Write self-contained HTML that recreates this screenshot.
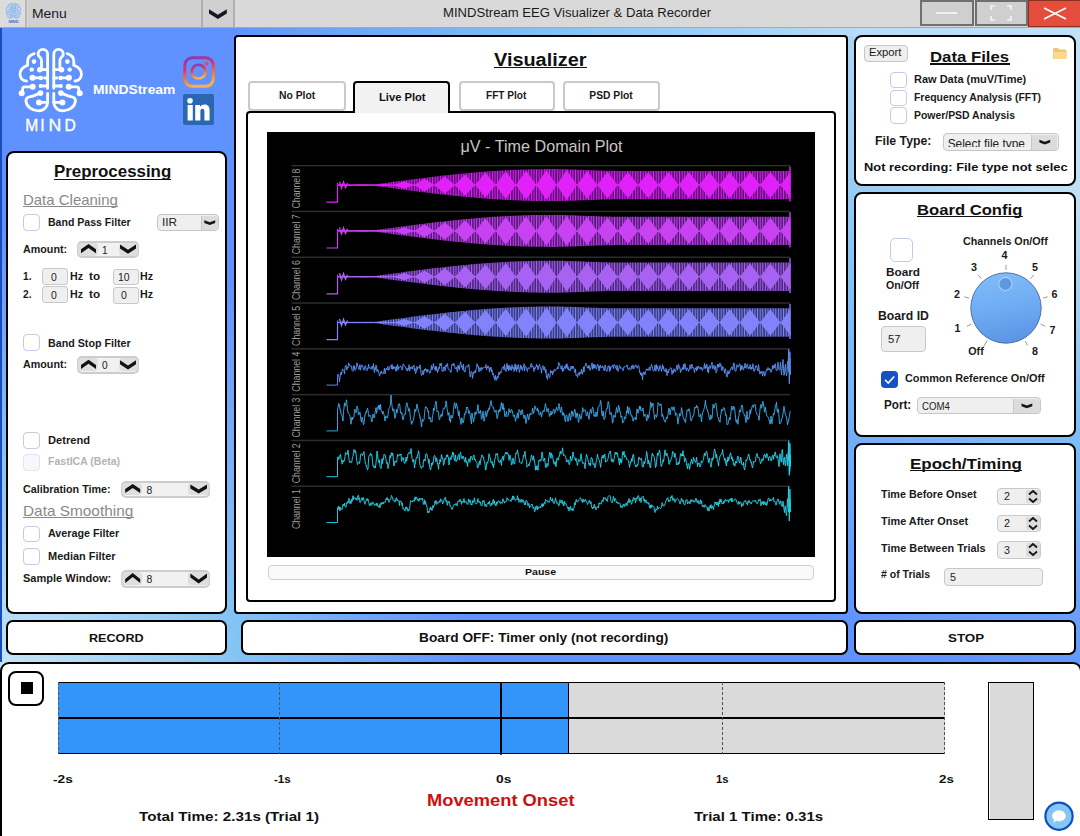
<!DOCTYPE html><html><head><meta charset="utf-8"><style>
*{margin:0;padding:0;box-sizing:border-box}
html,body{width:1080px;height:836px;overflow:hidden}
body{position:relative;font-family:"Liberation Sans",sans-serif;
background:radial-gradient(circle at 0px 690px,#cce8f8 0px,#84c4f4 240px,rgba(95,146,254,0) 470px),radial-gradient(circle at 1180px -50px,#c4e2f6 0px,#c0e0f6 270px,#80c0f4 480px,rgba(95,146,254,0) 760px),#5f92fe}
.t{position:absolute;white-space:nowrap;line-height:1}
.a{position:absolute}
.pn{position:absolute;background:#fff;border:2px solid #000;border-radius:8px}
.cb{position:absolute;width:17px;height:17px;border:1.2px solid #c3cbe6;border-radius:4px;background:#fff}
.gbox{position:absolute;background:#efefef;border:1.5px solid #c9c9c9;border-radius:4px}
</style></head><body><div class="a" style="left:0px;top:0px;width:1080px;height:28px;background:#d9d9d9;border-bottom:1.5px solid #a9a9a9"></div>
<div class="a" style="left:0px;top:0px;width:27px;height:27px;background:#dcdcdc;border-right:2px solid #b8b8b8"></div>
<div class="a" style="left:28px;top:0px;width:175px;height:27px;background:#d0d0d0;border-right:2px solid #b0b0b0"></div>
<div class="a" style="left:203px;top:0px;width:31.5px;height:27px;background:#d0d0d0;border-right:2px solid #b0b0b0"></div>
<span class="t" style="left:32.00px;top:8.00px;font-size:12.46px;font-weight:normal;color:#1a1a2a;transform:scaleX(1.119);transform-origin:left 50%;">Menu</span>
<svg class="a" style="left:0;top:0;overflow:visible" width="1" height="1"><polygon points="209.0,9.2 209.0,13.4 217.9,19.0 226.8,13.4 226.8,9.2 217.9,14.8" fill="#151525"/></svg>
<span class="t" style="left:443.00px;top:7.00px;font-size:12.75px;font-weight:normal;color:#1a1a1a;transform:scaleX(1.026);transform-origin:left 50%;">MINDStream EEG Visualizer &amp; Data Recorder</span>
<div class="a" style="left:920px;top:0px;width:54px;height:26px;background:#cfcfcf;border:2px solid #6f6f6f"></div>
<div class="a" style="left:975px;top:0px;width:53px;height:26px;background:#cfcfcf;border:2px solid #6f6f6f"></div>
<div class="a" style="left:1028px;top:0px;width:52px;height:26.5px;background:#e44c3b;border:1px solid #8c3020;border-right:none"></div>
<div class="a" style="left:936px;top:12px;width:21px;height:2px;background:#f2f2f2"></div>
<svg class="a" style="left:990px;top:5px" width="22" height="16" viewBox="0 0 22 16"><path d="M1 5V1h4M17 1h4v4M21 11v4h-4M5 15H1v-4" fill="none" stroke="#f4f4f4" stroke-width="1.6"/></svg>
<svg class="a" style="left:1043px;top:7px" width="24" height="13" viewBox="0 0 24 13"><path d="M1 1L23 12M23 1L1 12" stroke="#fff" stroke-width="1.6"/></svg>
<div class="a" style="left:0px;top:28px;width:2px;height:634px;background:#1a4cc0"></div>
<div class="a" style="left:233px;top:28px;width:847px;height:8px;background:linear-gradient(90deg,#5f92fe 0px,#6a9ff5 67px,#80c0f4 307px,#b8dcf8 627px,#c0e0f6 847px)"></div>
<svg class="a" style="left:15px;top:44px" width="72" height="72" viewBox="0 0 72 72"><g fill="none" stroke="#fff" stroke-width="2.8" stroke-linecap="round"><path d="M32.6,44.3 V10.2 A4.75,4.75 0 0 0 23.1,10.2 C23.1,12.8 26.5,13.2 26.5,16.2 V24" /><path d="M19.2,9.6 C15,10.8 12.6,13.5 12.6,17.5 V21.3 C8.5,22.8 5,26 5,30.3 C5,34 7.5,36.8 11.5,37" /><path d="M17.7,42.8 H9.6 Q7.6,42.8 7.6,45 V48" /><path d="M25.5,42 H32.6" /><path d="M19,33.9 H25" /><path d="M29.5,34 H32.6" /><path d="M24.8,25.7 H32.6" /><path d="M25.5,49.1 C22,50 19,52.5 14.5,52.8 C11.8,53.2 10.8,55 11,57.5 C11.8,63 17,66.8 23.6,66.8 C29,66.8 32.6,63 32.6,58 V49.5" /><path d="M24,58.4 H32.6" /><g stroke="none" fill="#fff"><circle cx="19" cy="17.6" r="2.3"/><circle cx="16.7" cy="25.6" r="2.2"/><circle cx="17.5" cy="33.8" r="3"/><circle cx="25.9" cy="34" r="2.2"/><circle cx="24.8" cy="25.7" r="2.7"/><circle cx="17.7" cy="42.8" r="3"/><circle cx="6.7" cy="49.3" r="3"/><circle cx="25.5" cy="42" r="1.9"/><circle cx="25.5" cy="49.1" r="2.8"/><circle cx="24" cy="58.4" r="3"/></g><g transform="translate(71.4,0) scale(-1,1)"><path d="M32.6,44.3 V10.2 A4.75,4.75 0 0 0 23.1,10.2 C23.1,12.8 26.5,13.2 26.5,16.2 V24" /><path d="M19.2,9.6 C15,10.8 12.6,13.5 12.6,17.5 V21.3 C8.5,22.8 5,26 5,30.3 C5,34 7.5,36.8 11.5,37" /><path d="M17.7,42.8 H9.6 Q7.6,42.8 7.6,45 V48" /><path d="M25.5,42 H32.6" /><path d="M19,33.9 H25" /><path d="M29.5,34 H32.6" /><path d="M24.8,25.7 H32.6" /><path d="M25.5,49.1 C22,50 19,52.5 14.5,52.8 C11.8,53.2 10.8,55 11,57.5 C11.8,63 17,66.8 23.6,66.8 C29,66.8 32.6,63 32.6,58 V49.5" /><path d="M24,58.4 H32.6" /><g stroke="none" fill="#fff"><circle cx="19" cy="17.6" r="2.3"/><circle cx="16.7" cy="25.6" r="2.2"/><circle cx="17.5" cy="33.8" r="3"/><circle cx="25.9" cy="34" r="2.2"/><circle cx="24.8" cy="25.7" r="2.7"/><circle cx="17.7" cy="42.8" r="3"/><circle cx="6.7" cy="49.3" r="3"/><circle cx="25.5" cy="42" r="1.9"/><circle cx="25.5" cy="49.1" r="2.8"/><circle cx="24" cy="58.4" r="3"/></g></g></g></svg>
<svg class="a" style="left:20px;top:115px" width="62" height="20" viewBox="20 115 62 20"><g font-family="Liberation Sans" font-size="15.6" fill="#fff" stroke="#fff" stroke-width="0.35"><text x="25.2" y="131">M</text><text x="40.2" y="131">I</text><text x="48.6" y="131" textLength="12.8" lengthAdjust="spacingAndGlyphs">N</text><text x="64.6" y="131">D</text></g></svg>
<span class="t" style="left:93.30px;top:84.00px;font-size:12.32px;font-weight:bold;color:#fff;transform:scaleX(1.125);transform-origin:left 50%;">MINDStream</span>
<svg class="a" style="left:5px;top:2px" width="17" height="22" viewBox="0 0 72 93"><g fill="none" stroke="#8fbdf2" stroke-width="5" stroke-linecap="round"><path d="M32.6,44.3 V10.2 A4.75,4.75 0 0 0 23.1,10.2 C23.1,12.8 26.5,13.2 26.5,16.2 V24" /><path d="M19.2,9.6 C15,10.8 12.6,13.5 12.6,17.5 V21.3 C8.5,22.8 5,26 5,30.3 C5,34 7.5,36.8 11.5,37" /><path d="M17.7,42.8 H9.6 Q7.6,42.8 7.6,45 V48" /><path d="M25.5,42 H32.6" /><path d="M19,33.9 H25" /><path d="M29.5,34 H32.6" /><path d="M24.8,25.7 H32.6" /><path d="M25.5,49.1 C22,50 19,52.5 14.5,52.8 C11.8,53.2 10.8,55 11,57.5 C11.8,63 17,66.8 23.6,66.8 C29,66.8 32.6,63 32.6,58 V49.5" /><path d="M24,58.4 H32.6" /><g stroke="none" fill="#7aaeee"><circle cx="19" cy="17.6" r="2.3"/><circle cx="16.7" cy="25.6" r="2.2"/><circle cx="17.5" cy="33.8" r="3"/><circle cx="25.9" cy="34" r="2.2"/><circle cx="24.8" cy="25.7" r="2.7"/><circle cx="17.7" cy="42.8" r="3"/><circle cx="6.7" cy="49.3" r="3"/><circle cx="25.5" cy="42" r="1.9"/><circle cx="25.5" cy="49.1" r="2.8"/><circle cx="24" cy="58.4" r="3"/></g><g transform="translate(71.4,0) scale(-1,1)"><path d="M32.6,44.3 V10.2 A4.75,4.75 0 0 0 23.1,10.2 C23.1,12.8 26.5,13.2 26.5,16.2 V24" /><path d="M19.2,9.6 C15,10.8 12.6,13.5 12.6,17.5 V21.3 C8.5,22.8 5,26 5,30.3 C5,34 7.5,36.8 11.5,37" /><path d="M17.7,42.8 H9.6 Q7.6,42.8 7.6,45 V48" /><path d="M25.5,42 H32.6" /><path d="M19,33.9 H25" /><path d="M29.5,34 H32.6" /><path d="M24.8,25.7 H32.6" /><path d="M25.5,49.1 C22,50 19,52.5 14.5,52.8 C11.8,53.2 10.8,55 11,57.5 C11.8,63 17,66.8 23.6,66.8 C29,66.8 32.6,63 32.6,58 V49.5" /><path d="M24,58.4 H32.6" /><g stroke="none" fill="#7aaeee"><circle cx="19" cy="17.6" r="2.3"/><circle cx="16.7" cy="25.6" r="2.2"/><circle cx="17.5" cy="33.8" r="3"/><circle cx="25.9" cy="34" r="2.2"/><circle cx="24.8" cy="25.7" r="2.7"/><circle cx="17.7" cy="42.8" r="3"/><circle cx="6.7" cy="49.3" r="3"/><circle cx="25.5" cy="42" r="1.9"/><circle cx="25.5" cy="49.1" r="2.8"/><circle cx="24" cy="58.4" r="3"/></g></g></g><text x="36" y="90" font-family="Liberation Sans" font-weight="bold" font-size="17" fill="#3d6cc8" text-anchor="middle">MIND</text></svg>
<svg class="a" style="left:182px;top:55px" width="34" height="34" viewBox="0 0 34 34"><defs><linearGradient id="ig" x1="0.35" y1="1" x2="0.1" y2="0"><stop offset="0" stop-color="#fcb045"/><stop offset="0.3" stop-color="#f77737"/><stop offset="0.62" stop-color="#e1306c"/><stop offset="1" stop-color="#833ab4"/></linearGradient></defs><rect x="2.8" y="2.8" width="28.5" height="28.5" rx="7.5" fill="none" stroke="url(#ig)" stroke-width="3"/><circle cx="16.6" cy="16.6" r="6.9" fill="none" stroke="url(#ig)" stroke-width="2.6"/><circle cx="24.6" cy="8.5" r="1.9" fill="#e8407a"/></svg>
<div class="a" style="left:183px;top:93.5px;width:31.30000000000001px;height:31.0px;background:#2a67b0;border-radius:2px"></div>
<svg class="a" style="left:183px;top:93.5px" width="31" height="31" viewBox="0 0 31 31"><circle cx="7" cy="6.8" r="2.8" fill="#fff"/><rect x="4.6" y="11" width="5.2" height="15.5" fill="#fff"/><path d="M12.2,26.5 V11 H17 V13 C18,11.3 19.8,10.6 21.6,10.6 C25,10.6 26.6,12.8 26.6,16.5 V26.5 H21.4 V17.5 C21.4,15.8 20.7,14.8 19.3,14.8 C17.9,14.8 17.4,15.9 17.4,17.5 V26.5 Z" fill="#fff"/></svg>
<div class="pn" style="left:5.5px;top:151px;width:221.5px;height:462.5px;border-radius:8px;border-width:2px;"></div>
<div class="pn" style="left:234px;top:35px;width:614px;height:578.5px;border-radius:4px;border-width:2px;"></div>
<div class="pn" style="left:854px;top:35px;width:222px;height:151px;border-radius:8px;border-width:2px;"></div>
<div class="pn" style="left:854px;top:192px;width:222px;height:244.5px;border-radius:8px;border-width:2px;"></div>
<div class="pn" style="left:854px;top:443px;width:222px;height:170.5px;border-radius:8px;border-width:2px;"></div>
<div class="pn" style="left:5.5px;top:620px;width:221.5px;height:35px;border-radius:7px;border-width:2px;"></div>
<div class="pn" style="left:240.5px;top:620px;width:607.5px;height:35px;border-radius:7px;border-width:2px;"></div>
<div class="pn" style="left:854px;top:620px;width:222px;height:35px;border-radius:7px;border-width:2px;"></div>
<div class="pn" style="left:0px;top:661.5px;width:1082px;height:188.5px;border-radius:9px;border-width:2px;"></div>
<span class="t" style="left:88.60px;top:633.00px;font-size:11.45px;font-weight:bold;color:#111;transform:scaleX(1.101);transform-origin:left 50%;">RECORD</span>
<span class="t" style="left:419.00px;top:632.00px;font-size:12.03px;font-weight:bold;color:#111;transform:scaleX(1.140);transform-origin:left 50%;">Board OFF: Timer only (not recording)</span>
<span class="t" style="left:947.60px;top:633.00px;font-size:11.45px;font-weight:bold;color:#111;transform:scaleX(1.168);transform-origin:left 50%;">STOP</span>
<span class="t" style="left:54.00px;top:163.00px;font-size:16.23px;font-weight:bold;color:#111;transform:scaleX(1.040);transform-origin:left 50%;">Preprocessing</span>
<div class="a" style="left:54px;top:178.6px;width:117px;height:1.5px;background:#111"></div>
<span class="t" style="left:23.20px;top:193.00px;font-size:14.78px;font-weight:normal;color:#8a8a8a;transform:scaleX(1.013);transform-origin:left 50%;">Data Cleaning</span>
<div class="a" style="left:23px;top:205.8px;width:95px;height:1.5px;background:#8a8a8a"></div>
<div class="a" style="left:23px;top:214px;width:17px;height:17px;border:1.3px solid #c3cbe6;border-radius:4px;background:#fff;"></div>
<span class="t" style="left:47.70px;top:218.00px;font-size:10.43px;font-weight:bold;color:#1a1a1a;transform:scaleX(1.012);transform-origin:left 50%;">Band Pass Filter</span>
<div class="a" style="left:157px;top:214px;width:62px;height:17px;background:#efefef;border:1.5px solid #c6c6c6;border-radius:4px"></div><div class="a" style="left:200.5px;top:215.5px;width:17.0px;height:14.0px;background:#dcdcdc;border-left:1px solid #c8c8c8;border-radius:0 3px 3px 0"></div><svg class="a" style="left:0;top:0;overflow:visible" width="1" height="1"><polygon points="204.3,220.3 204.3,223.1 209.8,225.1 215.2,223.1 215.2,220.3 209.8,222.3" fill="#151515"/></svg><span class="t" style="left:162.00px;top:218.00px;font-size:10.43px;font-weight:normal;color:#222;transform:scaleX(1.129);transform-origin:left 50%;">IIR</span>
<span class="t" style="left:23.00px;top:245.00px;font-size:10.14px;font-weight:bold;color:#1a1a1a;transform:scaleX(1.060);transform-origin:left 50%;">Amount:</span>
<div class="a" style="left:77px;top:240.6px;width:62px;height:17.700000000000017px;background:#f1f1f1;border:2px solid #cdcdcd;border-radius:5px"></div><div class="a" style="left:78px;top:242.6px;width:20px;height:13.200000000000017px;background:#dedede;border-radius:4px"></div><div class="a" style="left:118.5px;top:242.6px;width:19.5px;height:13.200000000000017px;background:#dedede;border-radius:4px"></div><svg class="a" style="left:0;top:0;overflow:visible" width="1" height="1"><polygon points="81.0,253.3 81.0,249.3 88.5,244.0 96.0,249.3 96.0,253.3 88.5,248.0" fill="#111"/><polygon points="120.0,244.4 120.0,248.4 128.0,253.8 136.0,248.4 136.0,244.4 128.0,249.8" fill="#111"/></svg>
<span class="t" style="left:102.00px;top:246.00px;font-size:10.14px;font-weight:normal;color:#222;">1</span>
<span class="t" style="left:23.00px;top:272.00px;font-size:10.14px;font-weight:bold;color:#1a1a1a;">1.</span>
<div class="a" style="left:42px;top:268px;width:25.5px;height:16.5px;background:#efefef;border:1.5px solid #c9c9c9;border-radius:3px"></div>
<span class="t" style="left:51.00px;top:273.00px;font-size:10.43px;font-weight:normal;color:#222;">0</span>
<span class="t" style="left:69.50px;top:272.00px;font-size:10.14px;font-weight:bold;color:#1a1a1a;transform:scaleX(1.053);transform-origin:left 50%;">Hz</span>
<span class="t" style="left:89.40px;top:272.00px;font-size:10.14px;font-weight:bold;color:#1a1a1a;transform:scaleX(1.154);transform-origin:left 50%;">to</span>
<div class="a" style="left:112.5px;top:268.5px;width:26.5px;height:16.5px;background:#efefef;border:1.5px solid #c9c9c9;border-radius:3px"></div>
<span class="t" style="left:118.00px;top:273.00px;font-size:10.43px;font-weight:normal;color:#222;">10</span>
<span class="t" style="left:140.40px;top:272.00px;font-size:10.14px;font-weight:bold;color:#1a1a1a;transform:scaleX(1.053);transform-origin:left 50%;">Hz</span>
<span class="t" style="left:23.00px;top:290.00px;font-size:10.14px;font-weight:bold;color:#1a1a1a;">2.</span>
<div class="a" style="left:42px;top:286px;width:25.5px;height:17px;background:#efefef;border:1.5px solid #c9c9c9;border-radius:3px"></div>
<span class="t" style="left:51.00px;top:291.00px;font-size:10.43px;font-weight:normal;color:#222;">0</span>
<span class="t" style="left:69.50px;top:290.00px;font-size:10.14px;font-weight:bold;color:#1a1a1a;transform:scaleX(1.053);transform-origin:left 50%;">Hz</span>
<span class="t" style="left:89.40px;top:290.00px;font-size:10.14px;font-weight:bold;color:#1a1a1a;transform:scaleX(1.154);transform-origin:left 50%;">to</span>
<div class="a" style="left:112.5px;top:286.5px;width:26.5px;height:17.0px;background:#efefef;border:1.5px solid #c9c9c9;border-radius:3px"></div>
<span class="t" style="left:121.00px;top:291.00px;font-size:10.43px;font-weight:normal;color:#222;">0</span>
<span class="t" style="left:140.40px;top:290.00px;font-size:10.14px;font-weight:bold;color:#1a1a1a;transform:scaleX(1.053);transform-origin:left 50%;">Hz</span>
<div class="a" style="left:23px;top:334px;width:17px;height:17px;border:1.3px solid #c3cbe6;border-radius:4px;background:#fff;"></div>
<span class="t" style="left:47.70px;top:339.00px;font-size:10.43px;font-weight:bold;color:#1a1a1a;transform:scaleX(1.027);transform-origin:left 50%;">Band Stop Filter</span>
<span class="t" style="left:23.00px;top:360.00px;font-size:10.14px;font-weight:bold;color:#1a1a1a;transform:scaleX(1.060);transform-origin:left 50%;">Amount:</span>
<div class="a" style="left:77px;top:356.4px;width:62px;height:17.600000000000023px;background:#f1f1f1;border:2px solid #cdcdcd;border-radius:5px"></div><div class="a" style="left:78px;top:358.4px;width:20px;height:13.100000000000023px;background:#dedede;border-radius:4px"></div><div class="a" style="left:118.5px;top:358.4px;width:19.5px;height:13.100000000000023px;background:#dedede;border-radius:4px"></div><svg class="a" style="left:0;top:0;overflow:visible" width="1" height="1"><polygon points="81.0,369.0 81.0,365.0 88.5,359.8 96.0,365.0 96.0,369.0 88.5,363.8" fill="#111"/><polygon points="120.0,360.2 120.0,364.2 128.0,369.5 136.0,364.2 136.0,360.2 128.0,365.5" fill="#111"/></svg>
<span class="t" style="left:102.00px;top:361.00px;font-size:10.14px;font-weight:normal;color:#222;">0</span>
<div class="a" style="left:23px;top:432px;width:17px;height:16.5px;border:1.3px solid #c3cbe6;border-radius:4px;background:#fff;"></div>
<span class="t" style="left:47.70px;top:436.00px;font-size:10.43px;font-weight:bold;color:#1a1a1a;transform:scaleX(1.069);transform-origin:left 50%;">Detrend</span>
<div class="a" style="left:23px;top:454px;width:17px;height:16.5px;border:1.3px solid #dfe4f2;border-radius:4px;background:#f6f8fc;"></div>
<span class="t" style="left:47.70px;top:457.00px;font-size:10.43px;font-weight:bold;color:#b3b3b3;transform:scaleX(1.010);transform-origin:left 50%;">FastICA (Beta)</span>
<span class="t" style="left:23.00px;top:485.00px;font-size:10.43px;font-weight:bold;color:#1a1a1a;transform:scaleX(1.032);transform-origin:left 50%;">Calibration Time:</span>
<div class="a" style="left:121px;top:480.7px;width:89px;height:17.30000000000001px;background:#f1f1f1;border:2px solid #cdcdcd;border-radius:5px"></div><div class="a" style="left:122px;top:482.7px;width:20px;height:12.800000000000011px;background:#dedede;border-radius:4px"></div><div class="a" style="left:188px;top:482.7px;width:20.5px;height:12.800000000000011px;background:#dedede;border-radius:4px"></div><svg class="a" style="left:0;top:0;overflow:visible" width="1" height="1"><polygon points="125.2,493.0 125.2,489.0 132.7,484.1 140.2,489.0 140.2,493.0 132.7,488.1" fill="#111"/><polygon points="190.4,484.5 190.4,488.5 198.7,493.5 207.0,488.5 207.0,484.5 198.7,489.5" fill="#111"/></svg>
<span class="t" style="left:146.50px;top:486.00px;font-size:10.43px;font-weight:normal;color:#222;">8</span>
<span class="t" style="left:23.20px;top:504.00px;font-size:14.78px;font-weight:normal;color:#8a8a8a;transform:scaleX(1.041);transform-origin:left 50%;">Data Smoothing</span>
<div class="a" style="left:23px;top:516.6px;width:110.80000000000001px;height:1.5px;background:#8a8a8a"></div>
<div class="a" style="left:23px;top:526px;width:17px;height:16px;border:1.3px solid #c3cbe6;border-radius:4px;background:#fff;"></div>
<span class="t" style="left:47.70px;top:529.00px;font-size:10.43px;font-weight:bold;color:#1a1a1a;transform:scaleX(1.029);transform-origin:left 50%;">Average Filter</span>
<div class="a" style="left:23px;top:548px;width:17px;height:16.5px;border:1.3px solid #c3cbe6;border-radius:4px;background:#fff;"></div>
<span class="t" style="left:47.70px;top:552.00px;font-size:10.43px;font-weight:bold;color:#1a1a1a;transform:scaleX(1.052);transform-origin:left 50%;">Median Filter</span>
<span class="t" style="left:23.00px;top:574.00px;font-size:10.43px;font-weight:bold;color:#1a1a1a;transform:scaleX(1.059);transform-origin:left 50%;">Sample Window:</span>
<div class="a" style="left:121px;top:569.6px;width:89px;height:18.299999999999955px;background:#f1f1f1;border:2px solid #cdcdcd;border-radius:5px"></div><div class="a" style="left:122px;top:571.6px;width:20px;height:13.799999999999955px;background:#dedede;border-radius:4px"></div><div class="a" style="left:188px;top:571.6px;width:20.5px;height:13.799999999999955px;background:#dedede;border-radius:4px"></div><svg class="a" style="left:0;top:0;overflow:visible" width="1" height="1"><polygon points="125.2,582.9 125.2,578.9 132.7,573.0 140.2,578.9 140.2,582.9 132.7,577.0" fill="#111"/><polygon points="190.4,573.4 190.4,577.4 198.7,583.4 207.0,577.4 207.0,573.4 198.7,579.4" fill="#111"/></svg>
<span class="t" style="left:146.50px;top:575.00px;font-size:10.43px;font-weight:normal;color:#222;">8</span>
<span class="t" style="left:494.40px;top:52.00px;font-size:17.83px;font-weight:bold;color:#111;transform:scaleX(1.115);transform-origin:left 50%;">Visualizer</span>
<div class="a" style="left:494.4px;top:66.6px;width:92.30000000000007px;height:1.7000000000000028px;background:#111"></div>
<div class="a" style="left:248px;top:80.5px;width:97.5px;height:30.0px;background:#fff;border:2.5px solid #c9c9c9;border-radius:4px"></div><span class="t" style="left:278.70px;top:91.00px;font-size:10.29px;font-weight:bold;color:#1a1a1a;transform:scaleX(1.007);transform-origin:left 50%;">No Plot</span>
<div class="a" style="left:459px;top:80.5px;width:96px;height:30.0px;background:#fff;border:2.5px solid #c9c9c9;border-radius:4px"></div><span class="t" style="left:485.60px;top:91.00px;font-size:10.29px;font-weight:bold;color:#1a1a1a;transform:scaleX(0.981);transform-origin:left 50%;">FFT Plot</span>
<div class="a" style="left:563.3px;top:80.5px;width:96.70000000000005px;height:30.0px;background:#fff;border:2.5px solid #c9c9c9;border-radius:4px"></div><span class="t" style="left:589.30px;top:91.00px;font-size:10.29px;font-weight:bold;color:#1a1a1a;">PSD Plot</span>
<div class="a" style="left:245.5px;top:111px;width:590.5px;height:491px;border:2px solid #000;border-radius:4px;background:#fff"></div>
<div class="a" style="left:353px;top:80.5px;width:97px;height:32.5px;background:#f2f2f2;border:2.5px solid #000;border-bottom:none;border-radius:4px 4px 0 0;z-index:2"></div><span class="t" style="left:378.50px;top:92.00px;font-size:10.72px;font-weight:bold;color:#111;transform:scaleX(1.043);transform-origin:left 50%;z-index:3;">Live Plot</span>
<div class="a" style="left:266.5px;top:132px;width:548.5px;height:425px;background:#000"></div>
<div class="a" style="left:268px;top:564.5px;width:546px;height:15.5px;background:#fafafa;border:1.3px solid #cfcfcf;border-radius:4px"></div>
<span class="t" style="left:525.00px;top:567.00px;font-size:9.71px;font-weight:bold;color:#111;transform:scaleX(1.085);transform-origin:left 50%;">Pause</span>
<svg class="a" style="left:266.5px;top:132px" width="548.5" height="425" viewBox="266.5 132 548.5 425"><defs><pattern id="st5" width="2.6" height="10" patternUnits="userSpaceOnUse"><rect width="2.6" height="10" fill="#343a78"/><rect width="1" height="10" fill="#8282fa"/></pattern><pattern id="st6" width="2.6" height="10" patternUnits="userSpaceOnUse"><rect width="2.6" height="10" fill="#462676"/><rect width="1" height="10" fill="#a862f2"/></pattern><pattern id="st7" width="2.6" height="10" patternUnits="userSpaceOnUse"><rect width="2.6" height="10" fill="#531a74"/><rect width="1" height="10" fill="#c842f2"/></pattern><pattern id="st8" width="2.6" height="10" patternUnits="userSpaceOnUse"><rect width="2.6" height="10" fill="#5a0f72"/><rect width="1" height="10" fill="#e021f8"/></pattern></defs><text x="541" y="152.4" font-family="Liberation Sans" font-size="16.6" fill="#c6c6c6" text-anchor="middle" textLength="162" lengthAdjust="spacingAndGlyphs">μV - Time Domain Plot</text><rect x="291" y="164.9" width="498.5" height="1.5" fill="#2d2d2d"/><rect x="291" y="210.7" width="498.5" height="1.5" fill="#2d2d2d"/><rect x="291" y="256.5" width="498.5" height="1.5" fill="#2d2d2d"/><rect x="291" y="302.3" width="498.5" height="1.5" fill="#2d2d2d"/><rect x="291" y="348.1" width="498.5" height="1.5" fill="#2d2d2d"/><rect x="291" y="393.9" width="498.5" height="1.5" fill="#2d2d2d"/><rect x="291" y="439.7" width="498.5" height="1.5" fill="#2d2d2d"/><rect x="291" y="485.5" width="498.5" height="1.5" fill="#2d2d2d"/><text transform="translate(299.5,188.5) rotate(-90)" font-family="Liberation Sans" font-size="10.3" fill="#9d9d9d" text-anchor="middle" textLength="40" lengthAdjust="spacingAndGlyphs">Channel 8</text><text transform="translate(299.5,234.3) rotate(-90)" font-family="Liberation Sans" font-size="10.3" fill="#9d9d9d" text-anchor="middle" textLength="40" lengthAdjust="spacingAndGlyphs">Channel 7</text><text transform="translate(299.5,280.1) rotate(-90)" font-family="Liberation Sans" font-size="10.3" fill="#9d9d9d" text-anchor="middle" textLength="40" lengthAdjust="spacingAndGlyphs">Channel 6</text><text transform="translate(299.5,325.9) rotate(-90)" font-family="Liberation Sans" font-size="10.3" fill="#9d9d9d" text-anchor="middle" textLength="40" lengthAdjust="spacingAndGlyphs">Channel 5</text><text transform="translate(299.5,371.7) rotate(-90)" font-family="Liberation Sans" font-size="10.3" fill="#9d9d9d" text-anchor="middle" textLength="40" lengthAdjust="spacingAndGlyphs">Channel 4</text><text transform="translate(299.5,417.5) rotate(-90)" font-family="Liberation Sans" font-size="10.3" fill="#9d9d9d" text-anchor="middle" textLength="40" lengthAdjust="spacingAndGlyphs">Channel 3</text><text transform="translate(299.5,463.3) rotate(-90)" font-family="Liberation Sans" font-size="10.3" fill="#9d9d9d" text-anchor="middle" textLength="40" lengthAdjust="spacingAndGlyphs">Channel 2</text><text transform="translate(299.5,509.1) rotate(-90)" font-family="Liberation Sans" font-size="10.3" fill="#9d9d9d" text-anchor="middle" textLength="40" lengthAdjust="spacingAndGlyphs">Channel 1</text><path d="M326,202.2 H337.0 V183.1" fill="none" stroke="#e021f8" stroke-width="1.2"/><polygon points="337.0,184.30 339.0,184.30 341.0,184.30 343.0,184.30 345.0,184.30 347.0,184.30 349.0,184.30 351.0,184.30 353.0,184.30 355.0,184.30 357.0,184.30 359.0,184.30 361.0,184.30 363.0,184.30 365.0,184.30 367.0,184.30 369.0,184.30 371.0,184.30 373.0,184.30 375.0,184.30 377.0,184.03 379.0,183.75 381.0,183.48 383.0,183.21 385.0,182.94 387.0,182.67 389.0,182.39 391.0,182.12 393.0,181.85 395.0,181.59 397.0,181.32 399.0,181.05 401.0,180.78 403.0,180.52 405.0,180.26 407.0,179.99 409.0,179.73 411.0,179.47 413.0,179.22 415.0,178.96 417.0,178.70 419.0,178.45 421.0,178.20 423.0,177.95 425.0,177.70 427.0,177.46 429.0,177.22 431.0,176.98 433.0,176.74 435.0,176.50 437.0,176.27 439.0,176.04 441.0,175.81 443.0,175.59 445.0,175.37 447.0,175.15 449.0,174.93 451.0,174.72 453.0,174.51 455.0,174.30 457.0,174.10 459.0,173.89 461.0,173.70 463.0,173.50 465.0,173.31 467.0,173.13 469.0,172.94 471.0,172.76 473.0,172.59 475.0,172.42 477.0,172.25 479.0,172.08 481.0,171.92 483.0,171.77 485.0,171.61 487.0,171.47 489.0,171.32 491.0,171.18 493.0,171.05 495.0,170.91 497.0,170.79 499.0,170.67 501.0,170.55 503.0,170.43 505.0,170.32 507.0,170.22 509.0,170.12 511.0,170.02 513.0,169.93 515.0,169.84 517.0,169.76 519.0,169.68 521.0,169.61 523.0,169.54 525.0,169.48 527.0,169.42 529.0,169.37 531.0,169.32 533.0,169.28 535.0,169.24 537.0,169.20 539.0,169.17 541.0,169.15 543.0,169.13 545.0,169.12 547.0,169.11 549.0,169.10 551.0,169.10 553.0,169.11 555.0,169.12 557.0,169.14 559.0,169.17 561.0,169.21 563.0,169.25 565.0,169.30 567.0,169.35 569.0,169.41 571.0,169.47 573.0,169.54 575.0,169.61 577.0,169.68 579.0,169.76 581.0,169.84 583.0,169.92 585.0,170.00 587.0,170.08 589.0,170.16 591.0,170.24 593.0,170.32 595.0,170.39 597.0,170.46 599.0,170.53 601.0,170.59 603.0,170.65 605.0,170.70 607.0,170.75 609.0,170.79 611.0,170.83 613.0,170.86 615.0,170.88 617.0,170.89 619.0,170.90 621.0,170.90 623.0,170.90 625.0,170.90 627.0,170.90 629.0,170.90 631.0,170.90 633.0,170.90 635.0,170.90 637.0,170.90 639.0,170.90 641.0,170.90 643.0,170.90 645.0,170.90 647.0,170.90 649.0,170.90 651.0,170.90 653.0,170.90 655.0,170.90 657.0,170.90 659.0,170.90 661.0,170.90 663.0,170.90 665.0,170.90 667.0,170.90 669.0,170.90 671.0,170.90 673.0,170.90 675.0,170.90 677.0,170.90 679.0,170.90 681.0,170.90 683.0,170.90 685.0,170.90 687.0,170.90 689.0,170.90 691.0,170.90 693.0,170.90 695.0,170.90 697.0,170.90 699.0,170.90 701.0,170.90 703.0,170.90 705.0,170.90 707.0,170.90 709.0,170.90 711.0,170.90 713.0,170.90 715.0,170.90 717.0,170.90 719.0,170.90 721.0,170.90 723.0,170.90 725.0,170.90 727.0,170.90 729.0,170.90 731.0,170.90 733.0,170.90 735.0,170.90 737.0,170.90 739.0,170.90 741.0,170.90 743.0,170.90 745.0,170.90 747.0,170.90 749.0,170.90 751.0,170.90 753.0,170.90 755.0,170.90 757.0,170.90 759.0,170.90 761.0,170.90 763.0,170.90 765.0,170.90 767.0,170.90 769.0,170.90 771.0,170.90 773.0,170.90 775.0,170.90 777.0,170.90 779.0,170.90 781.0,170.90 783.0,170.90 785.0,170.90 787.0,170.90 789.0,170.90 789.0,199.30 787.0,199.30 785.0,199.30 783.0,199.30 781.0,199.30 779.0,199.30 777.0,199.30 775.0,199.30 773.0,199.30 771.0,199.30 769.0,199.30 767.0,199.30 765.0,199.30 763.0,199.30 761.0,199.30 759.0,199.30 757.0,199.30 755.0,199.30 753.0,199.30 751.0,199.30 749.0,199.30 747.0,199.30 745.0,199.30 743.0,199.30 741.0,199.30 739.0,199.30 737.0,199.30 735.0,199.30 733.0,199.30 731.0,199.30 729.0,199.30 727.0,199.30 725.0,199.30 723.0,199.30 721.0,199.30 719.0,199.30 717.0,199.30 715.0,199.30 713.0,199.30 711.0,199.30 709.0,199.30 707.0,199.30 705.0,199.30 703.0,199.30 701.0,199.30 699.0,199.30 697.0,199.30 695.0,199.30 693.0,199.30 691.0,199.30 689.0,199.30 687.0,199.30 685.0,199.30 683.0,199.30 681.0,199.30 679.0,199.30 677.0,199.30 675.0,199.30 673.0,199.30 671.0,199.30 669.0,199.30 667.0,199.30 665.0,199.30 663.0,199.30 661.0,199.30 659.0,199.30 657.0,199.30 655.0,199.30 653.0,199.30 651.0,199.30 649.0,199.30 647.0,199.30 645.0,199.30 643.0,199.30 641.0,199.30 639.0,199.30 637.0,199.30 635.0,199.30 633.0,199.30 631.0,199.30 629.0,199.30 627.0,199.30 625.0,199.30 623.0,199.30 621.0,199.30 619.0,199.30 617.0,199.31 615.0,199.32 613.0,199.34 611.0,199.37 609.0,199.41 607.0,199.45 605.0,199.50 603.0,199.55 601.0,199.61 599.0,199.67 597.0,199.74 595.0,199.81 593.0,199.88 591.0,199.96 589.0,200.04 587.0,200.12 585.0,200.20 583.0,200.28 581.0,200.36 579.0,200.44 577.0,200.52 575.0,200.59 573.0,200.66 571.0,200.73 569.0,200.79 567.0,200.85 565.0,200.90 563.0,200.95 561.0,200.99 559.0,201.03 557.0,201.06 555.0,201.08 553.0,201.09 551.0,201.10 549.0,201.10 547.0,201.09 545.0,201.08 543.0,201.07 541.0,201.05 539.0,201.03 537.0,201.00 535.0,200.96 533.0,200.92 531.0,200.88 529.0,200.83 527.0,200.78 525.0,200.72 523.0,200.66 521.0,200.59 519.0,200.52 517.0,200.44 515.0,200.36 513.0,200.27 511.0,200.18 509.0,200.08 507.0,199.98 505.0,199.88 503.0,199.77 501.0,199.65 499.0,199.53 497.0,199.41 495.0,199.29 493.0,199.15 491.0,199.02 489.0,198.88 487.0,198.73 485.0,198.59 483.0,198.43 481.0,198.28 479.0,198.12 477.0,197.95 475.0,197.78 473.0,197.61 471.0,197.44 469.0,197.26 467.0,197.07 465.0,196.89 463.0,196.70 461.0,196.50 459.0,196.31 457.0,196.10 455.0,195.90 453.0,195.69 451.0,195.48 449.0,195.27 447.0,195.05 445.0,194.83 443.0,194.61 441.0,194.39 439.0,194.16 437.0,193.93 435.0,193.70 433.0,193.46 431.0,193.22 429.0,192.98 427.0,192.74 425.0,192.50 423.0,192.25 421.0,192.00 419.0,191.75 417.0,191.50 415.0,191.24 413.0,190.98 411.0,190.73 409.0,190.47 407.0,190.21 405.0,189.94 403.0,189.68 401.0,189.42 399.0,189.15 397.0,188.88 395.0,188.61 393.0,188.35 391.0,188.08 389.0,187.81 387.0,187.53 385.0,187.26 383.0,186.99 381.0,186.72 379.0,186.45 377.0,186.17 375.0,185.90 373.0,185.90 371.0,185.90 369.0,185.90 367.0,185.90 365.0,185.90 363.0,185.90 361.0,185.90 359.0,185.90 357.0,185.90 355.0,185.90 353.0,185.90 351.0,185.90 349.0,185.90 347.0,185.90 345.0,185.90 343.0,185.90 341.0,185.90 339.0,185.90 337.0,185.90" fill="url(#st8)"/><path d="M337.0,185.1 L342.4,184.6 L352.6,185.1 L342.4,185.6 Z M352.6,185.1 L362.8,184.6 L373.0,185.1 L362.8,185.6 Z M373.0,185.1 L383.1,184.2 L393.3,185.1 L383.1,186.0 Z M393.3,185.1 L403.5,181.5 L413.7,185.1 L403.5,188.7 Z M413.7,185.1 L423.9,178.8 L434.0,185.1 L423.9,191.4 Z M434.0,185.1 L444.2,176.5 L454.4,185.1 L444.2,193.7 Z M454.4,185.1 L464.5,174.4 L474.7,185.1 L464.5,195.8 Z M474.7,185.1 L484.9,172.6 L495.1,185.1 L484.9,197.6 Z M495.1,185.1 L505.2,171.3 L515.4,185.1 L505.2,198.9 Z M515.4,185.1 L525.6,170.5 L535.8,185.1 L525.6,199.7 Z M535.8,185.1 L546.0,170.1 L556.1,185.1 L546.0,200.1 Z M556.1,185.1 L566.3,170.3 L576.5,185.1 L566.3,199.9 Z M576.5,185.1 L586.6,171.1 L596.8,185.1 L586.6,199.1 Z M596.8,185.1 L607.0,171.8 L617.2,185.1 L607.0,198.4 Z M617.2,185.1 L627.4,171.9 L637.5,185.1 L627.4,198.3 Z M637.5,185.1 L647.7,171.9 L657.9,185.1 L647.7,198.3 Z M657.9,185.1 L668.0,171.9 L678.2,185.1 L668.0,198.3 Z M678.2,185.1 L688.4,171.9 L698.6,185.1 L688.4,198.3 Z M698.6,185.1 L708.8,171.9 L718.9,185.1 L708.8,198.3 Z M718.9,185.1 L729.1,171.9 L739.3,185.1 L729.1,198.3 Z M739.3,185.1 L749.5,171.9 L759.6,185.1 L749.5,198.3 Z M759.6,185.1 L769.8,171.9 L780.0,185.1 L769.8,198.3 Z M780.0,185.1 L790.1,171.9 L790.0,185.1 L790.1,198.3 Z" fill="#e021f8"/><path d="M337.0,185.1 H790.0" stroke="#e021f8" stroke-width="1.2"/><rect x="788.8" y="166.5" width="1.4" height="35.1" fill="#e021f8"/><path d="M339,181.6 L341,188.1 L343,182.1 L345,187.6 L347,183.1" fill="none" stroke="#e021f8" stroke-width="1.4"/><path d="M326,248.0 H337.0 V228.9" fill="none" stroke="#c842f2" stroke-width="1.2"/><polygon points="337.0,230.10 339.0,230.10 341.0,230.10 343.0,230.10 345.0,230.10 347.0,230.10 349.0,230.10 351.0,230.10 353.0,230.10 355.0,230.10 357.0,230.10 359.0,230.10 361.0,230.10 363.0,230.10 365.0,230.10 367.0,230.10 369.0,230.10 371.0,230.10 373.0,230.10 375.0,230.10 377.0,229.83 379.0,229.55 381.0,229.28 383.0,229.01 385.0,228.74 387.0,228.47 389.0,228.19 391.0,227.92 393.0,227.65 395.0,227.39 397.0,227.12 399.0,226.85 401.0,226.58 403.0,226.32 405.0,226.06 407.0,225.79 409.0,225.53 411.0,225.27 413.0,225.02 415.0,224.76 417.0,224.50 419.0,224.25 421.0,224.00 423.0,223.75 425.0,223.50 427.0,223.26 429.0,223.02 431.0,222.78 433.0,222.54 435.0,222.30 437.0,222.07 439.0,221.84 441.0,221.61 443.0,221.39 445.0,221.17 447.0,220.95 449.0,220.73 451.0,220.52 453.0,220.31 455.0,220.10 457.0,219.90 459.0,219.69 461.0,219.50 463.0,219.30 465.0,219.11 467.0,218.93 469.0,218.74 471.0,218.56 473.0,218.39 475.0,218.22 477.0,218.05 479.0,217.88 481.0,217.72 483.0,217.57 485.0,217.41 487.0,217.27 489.0,217.12 491.0,216.98 493.0,216.85 495.0,216.71 497.0,216.59 499.0,216.47 501.0,216.35 503.0,216.23 505.0,216.12 507.0,216.02 509.0,215.92 511.0,215.82 513.0,215.73 515.0,215.64 517.0,215.56 519.0,215.48 521.0,215.41 523.0,215.34 525.0,215.28 527.0,215.22 529.0,215.17 531.0,215.12 533.0,215.08 535.0,215.04 537.0,215.00 539.0,214.97 541.0,214.95 543.0,214.93 545.0,214.92 547.0,214.91 549.0,214.90 551.0,214.90 553.0,214.91 555.0,214.92 557.0,214.94 559.0,214.97 561.0,215.01 563.0,215.05 565.0,215.10 567.0,215.15 569.0,215.21 571.0,215.27 573.0,215.34 575.0,215.41 577.0,215.48 579.0,215.56 581.0,215.64 583.0,215.72 585.0,215.80 587.0,215.88 589.0,215.96 591.0,216.04 593.0,216.12 595.0,216.19 597.0,216.26 599.0,216.33 601.0,216.39 603.0,216.45 605.0,216.50 607.0,216.55 609.0,216.59 611.0,216.63 613.0,216.66 615.0,216.68 617.0,216.69 619.0,216.70 621.0,216.70 623.0,216.70 625.0,216.70 627.0,216.70 629.0,216.70 631.0,216.70 633.0,216.70 635.0,216.70 637.0,216.70 639.0,216.70 641.0,216.70 643.0,216.70 645.0,216.70 647.0,216.70 649.0,216.70 651.0,216.70 653.0,216.70 655.0,216.70 657.0,216.70 659.0,216.70 661.0,216.70 663.0,216.70 665.0,216.70 667.0,216.70 669.0,216.70 671.0,216.70 673.0,216.70 675.0,216.70 677.0,216.70 679.0,216.70 681.0,216.70 683.0,216.70 685.0,216.70 687.0,216.70 689.0,216.70 691.0,216.70 693.0,216.70 695.0,216.70 697.0,216.70 699.0,216.70 701.0,216.70 703.0,216.70 705.0,216.70 707.0,216.70 709.0,216.70 711.0,216.70 713.0,216.70 715.0,216.70 717.0,216.70 719.0,216.70 721.0,216.70 723.0,216.70 725.0,216.70 727.0,216.70 729.0,216.70 731.0,216.70 733.0,216.70 735.0,216.70 737.0,216.70 739.0,216.70 741.0,216.70 743.0,216.70 745.0,216.70 747.0,216.70 749.0,216.70 751.0,216.70 753.0,216.70 755.0,216.70 757.0,216.70 759.0,216.70 761.0,216.70 763.0,216.70 765.0,216.70 767.0,216.70 769.0,216.70 771.0,216.70 773.0,216.70 775.0,216.70 777.0,216.70 779.0,216.70 781.0,216.70 783.0,216.70 785.0,216.70 787.0,216.70 789.0,216.70 789.0,245.10 787.0,245.10 785.0,245.10 783.0,245.10 781.0,245.10 779.0,245.10 777.0,245.10 775.0,245.10 773.0,245.10 771.0,245.10 769.0,245.10 767.0,245.10 765.0,245.10 763.0,245.10 761.0,245.10 759.0,245.10 757.0,245.10 755.0,245.10 753.0,245.10 751.0,245.10 749.0,245.10 747.0,245.10 745.0,245.10 743.0,245.10 741.0,245.10 739.0,245.10 737.0,245.10 735.0,245.10 733.0,245.10 731.0,245.10 729.0,245.10 727.0,245.10 725.0,245.10 723.0,245.10 721.0,245.10 719.0,245.10 717.0,245.10 715.0,245.10 713.0,245.10 711.0,245.10 709.0,245.10 707.0,245.10 705.0,245.10 703.0,245.10 701.0,245.10 699.0,245.10 697.0,245.10 695.0,245.10 693.0,245.10 691.0,245.10 689.0,245.10 687.0,245.10 685.0,245.10 683.0,245.10 681.0,245.10 679.0,245.10 677.0,245.10 675.0,245.10 673.0,245.10 671.0,245.10 669.0,245.10 667.0,245.10 665.0,245.10 663.0,245.10 661.0,245.10 659.0,245.10 657.0,245.10 655.0,245.10 653.0,245.10 651.0,245.10 649.0,245.10 647.0,245.10 645.0,245.10 643.0,245.10 641.0,245.10 639.0,245.10 637.0,245.10 635.0,245.10 633.0,245.10 631.0,245.10 629.0,245.10 627.0,245.10 625.0,245.10 623.0,245.10 621.0,245.10 619.0,245.10 617.0,245.11 615.0,245.12 613.0,245.14 611.0,245.17 609.0,245.21 607.0,245.25 605.0,245.30 603.0,245.35 601.0,245.41 599.0,245.47 597.0,245.54 595.0,245.61 593.0,245.68 591.0,245.76 589.0,245.84 587.0,245.92 585.0,246.00 583.0,246.08 581.0,246.16 579.0,246.24 577.0,246.32 575.0,246.39 573.0,246.46 571.0,246.53 569.0,246.59 567.0,246.65 565.0,246.70 563.0,246.75 561.0,246.79 559.0,246.83 557.0,246.86 555.0,246.88 553.0,246.89 551.0,246.90 549.0,246.90 547.0,246.89 545.0,246.88 543.0,246.87 541.0,246.85 539.0,246.83 537.0,246.80 535.0,246.76 533.0,246.72 531.0,246.68 529.0,246.63 527.0,246.58 525.0,246.52 523.0,246.46 521.0,246.39 519.0,246.32 517.0,246.24 515.0,246.16 513.0,246.07 511.0,245.98 509.0,245.88 507.0,245.78 505.0,245.68 503.0,245.57 501.0,245.45 499.0,245.33 497.0,245.21 495.0,245.09 493.0,244.95 491.0,244.82 489.0,244.68 487.0,244.53 485.0,244.39 483.0,244.23 481.0,244.08 479.0,243.92 477.0,243.75 475.0,243.58 473.0,243.41 471.0,243.24 469.0,243.06 467.0,242.87 465.0,242.69 463.0,242.50 461.0,242.30 459.0,242.11 457.0,241.90 455.0,241.70 453.0,241.49 451.0,241.28 449.0,241.07 447.0,240.85 445.0,240.63 443.0,240.41 441.0,240.19 439.0,239.96 437.0,239.73 435.0,239.50 433.0,239.26 431.0,239.02 429.0,238.78 427.0,238.54 425.0,238.30 423.0,238.05 421.0,237.80 419.0,237.55 417.0,237.30 415.0,237.04 413.0,236.78 411.0,236.53 409.0,236.27 407.0,236.01 405.0,235.74 403.0,235.48 401.0,235.22 399.0,234.95 397.0,234.68 395.0,234.41 393.0,234.15 391.0,233.88 389.0,233.61 387.0,233.33 385.0,233.06 383.0,232.79 381.0,232.52 379.0,232.25 377.0,231.97 375.0,231.70 373.0,231.70 371.0,231.70 369.0,231.70 367.0,231.70 365.0,231.70 363.0,231.70 361.0,231.70 359.0,231.70 357.0,231.70 355.0,231.70 353.0,231.70 351.0,231.70 349.0,231.70 347.0,231.70 345.0,231.70 343.0,231.70 341.0,231.70 339.0,231.70 337.0,231.70" fill="url(#st7)"/><path d="M337.0,230.9 L342.4,230.4 L352.6,230.9 L342.4,231.4 Z M352.6,230.9 L362.8,230.4 L373.0,230.9 L362.8,231.4 Z M373.0,230.9 L383.1,230.0 L393.3,230.9 L383.1,231.8 Z M393.3,230.9 L403.5,227.3 L413.7,230.9 L403.5,234.5 Z M413.7,230.9 L423.9,224.6 L434.0,230.9 L423.9,237.2 Z M434.0,230.9 L444.2,222.3 L454.4,230.9 L444.2,239.5 Z M454.4,230.9 L464.5,220.2 L474.7,230.9 L464.5,241.6 Z M474.7,230.9 L484.9,218.4 L495.1,230.9 L484.9,243.4 Z M495.1,230.9 L505.2,217.1 L515.4,230.9 L505.2,244.7 Z M515.4,230.9 L525.6,216.3 L535.8,230.9 L525.6,245.5 Z M535.8,230.9 L546.0,215.9 L556.1,230.9 L546.0,245.9 Z M556.1,230.9 L566.3,216.1 L576.5,230.9 L566.3,245.7 Z M576.5,230.9 L586.6,216.9 L596.8,230.9 L586.6,244.9 Z M596.8,230.9 L607.0,217.6 L617.2,230.9 L607.0,244.2 Z M617.2,230.9 L627.4,217.7 L637.5,230.9 L627.4,244.1 Z M637.5,230.9 L647.7,217.7 L657.9,230.9 L647.7,244.1 Z M657.9,230.9 L668.0,217.7 L678.2,230.9 L668.0,244.1 Z M678.2,230.9 L688.4,217.7 L698.6,230.9 L688.4,244.1 Z M698.6,230.9 L708.8,217.7 L718.9,230.9 L708.8,244.1 Z M718.9,230.9 L729.1,217.7 L739.3,230.9 L729.1,244.1 Z M739.3,230.9 L749.5,217.7 L759.6,230.9 L749.5,244.1 Z M759.6,230.9 L769.8,217.7 L780.0,230.9 L769.8,244.1 Z M780.0,230.9 L790.1,217.7 L790.0,230.9 L790.1,244.1 Z" fill="#c842f2"/><path d="M337.0,230.9 H790.0" stroke="#c842f2" stroke-width="1.2"/><rect x="788.8" y="212.3" width="1.4" height="35.1" fill="#c842f2"/><path d="M339,227.4 L341,233.9 L343,227.9 L345,233.4 L347,228.9" fill="none" stroke="#c842f2" stroke-width="1.4"/><path d="M326,293.8 H337.0 V274.7" fill="none" stroke="#a862f2" stroke-width="1.2"/><polygon points="337.0,275.90 339.0,275.90 341.0,275.90 343.0,275.90 345.0,275.90 347.0,275.90 349.0,275.90 351.0,275.90 353.0,275.90 355.0,275.90 357.0,275.90 359.0,275.90 361.0,275.90 363.0,275.90 365.0,275.90 367.0,275.90 369.0,275.90 371.0,275.90 373.0,275.90 375.0,275.90 377.0,275.63 379.0,275.35 381.0,275.08 383.0,274.81 385.0,274.54 387.0,274.27 389.0,273.99 391.0,273.72 393.0,273.45 395.0,273.19 397.0,272.92 399.0,272.65 401.0,272.38 403.0,272.12 405.0,271.86 407.0,271.59 409.0,271.33 411.0,271.07 413.0,270.82 415.0,270.56 417.0,270.30 419.0,270.05 421.0,269.80 423.0,269.55 425.0,269.30 427.0,269.06 429.0,268.82 431.0,268.58 433.0,268.34 435.0,268.10 437.0,267.87 439.0,267.64 441.0,267.41 443.0,267.19 445.0,266.97 447.0,266.75 449.0,266.53 451.0,266.32 453.0,266.11 455.0,265.90 457.0,265.70 459.0,265.49 461.0,265.30 463.0,265.10 465.0,264.91 467.0,264.73 469.0,264.54 471.0,264.36 473.0,264.19 475.0,264.02 477.0,263.85 479.0,263.68 481.0,263.52 483.0,263.37 485.0,263.21 487.0,263.07 489.0,262.92 491.0,262.78 493.0,262.65 495.0,262.51 497.0,262.39 499.0,262.27 501.0,262.15 503.0,262.03 505.0,261.92 507.0,261.82 509.0,261.72 511.0,261.62 513.0,261.53 515.0,261.44 517.0,261.36 519.0,261.28 521.0,261.21 523.0,261.14 525.0,261.08 527.0,261.02 529.0,260.97 531.0,260.92 533.0,260.88 535.0,260.84 537.0,260.80 539.0,260.77 541.0,260.75 543.0,260.73 545.0,260.72 547.0,260.71 549.0,260.70 551.0,260.70 553.0,260.71 555.0,260.72 557.0,260.74 559.0,260.77 561.0,260.81 563.0,260.85 565.0,260.90 567.0,260.95 569.0,261.01 571.0,261.07 573.0,261.14 575.0,261.21 577.0,261.28 579.0,261.36 581.0,261.44 583.0,261.52 585.0,261.60 587.0,261.68 589.0,261.76 591.0,261.84 593.0,261.92 595.0,261.99 597.0,262.06 599.0,262.13 601.0,262.19 603.0,262.25 605.0,262.30 607.0,262.35 609.0,262.39 611.0,262.43 613.0,262.46 615.0,262.48 617.0,262.49 619.0,262.50 621.0,262.50 623.0,262.50 625.0,262.50 627.0,262.50 629.0,262.50 631.0,262.50 633.0,262.50 635.0,262.50 637.0,262.50 639.0,262.50 641.0,262.50 643.0,262.50 645.0,262.50 647.0,262.50 649.0,262.50 651.0,262.50 653.0,262.50 655.0,262.50 657.0,262.50 659.0,262.50 661.0,262.50 663.0,262.50 665.0,262.50 667.0,262.50 669.0,262.50 671.0,262.50 673.0,262.50 675.0,262.50 677.0,262.50 679.0,262.50 681.0,262.50 683.0,262.50 685.0,262.50 687.0,262.50 689.0,262.50 691.0,262.50 693.0,262.50 695.0,262.50 697.0,262.50 699.0,262.50 701.0,262.50 703.0,262.50 705.0,262.50 707.0,262.50 709.0,262.50 711.0,262.50 713.0,262.50 715.0,262.50 717.0,262.50 719.0,262.50 721.0,262.50 723.0,262.50 725.0,262.50 727.0,262.50 729.0,262.50 731.0,262.50 733.0,262.50 735.0,262.50 737.0,262.50 739.0,262.50 741.0,262.50 743.0,262.50 745.0,262.50 747.0,262.50 749.0,262.50 751.0,262.50 753.0,262.50 755.0,262.50 757.0,262.50 759.0,262.50 761.0,262.50 763.0,262.50 765.0,262.50 767.0,262.50 769.0,262.50 771.0,262.50 773.0,262.50 775.0,262.50 777.0,262.50 779.0,262.50 781.0,262.50 783.0,262.50 785.0,262.50 787.0,262.50 789.0,262.50 789.0,290.90 787.0,290.90 785.0,290.90 783.0,290.90 781.0,290.90 779.0,290.90 777.0,290.90 775.0,290.90 773.0,290.90 771.0,290.90 769.0,290.90 767.0,290.90 765.0,290.90 763.0,290.90 761.0,290.90 759.0,290.90 757.0,290.90 755.0,290.90 753.0,290.90 751.0,290.90 749.0,290.90 747.0,290.90 745.0,290.90 743.0,290.90 741.0,290.90 739.0,290.90 737.0,290.90 735.0,290.90 733.0,290.90 731.0,290.90 729.0,290.90 727.0,290.90 725.0,290.90 723.0,290.90 721.0,290.90 719.0,290.90 717.0,290.90 715.0,290.90 713.0,290.90 711.0,290.90 709.0,290.90 707.0,290.90 705.0,290.90 703.0,290.90 701.0,290.90 699.0,290.90 697.0,290.90 695.0,290.90 693.0,290.90 691.0,290.90 689.0,290.90 687.0,290.90 685.0,290.90 683.0,290.90 681.0,290.90 679.0,290.90 677.0,290.90 675.0,290.90 673.0,290.90 671.0,290.90 669.0,290.90 667.0,290.90 665.0,290.90 663.0,290.90 661.0,290.90 659.0,290.90 657.0,290.90 655.0,290.90 653.0,290.90 651.0,290.90 649.0,290.90 647.0,290.90 645.0,290.90 643.0,290.90 641.0,290.90 639.0,290.90 637.0,290.90 635.0,290.90 633.0,290.90 631.0,290.90 629.0,290.90 627.0,290.90 625.0,290.90 623.0,290.90 621.0,290.90 619.0,290.90 617.0,290.91 615.0,290.92 613.0,290.94 611.0,290.97 609.0,291.01 607.0,291.05 605.0,291.10 603.0,291.15 601.0,291.21 599.0,291.27 597.0,291.34 595.0,291.41 593.0,291.48 591.0,291.56 589.0,291.64 587.0,291.72 585.0,291.80 583.0,291.88 581.0,291.96 579.0,292.04 577.0,292.12 575.0,292.19 573.0,292.26 571.0,292.33 569.0,292.39 567.0,292.45 565.0,292.50 563.0,292.55 561.0,292.59 559.0,292.63 557.0,292.66 555.0,292.68 553.0,292.69 551.0,292.70 549.0,292.70 547.0,292.69 545.0,292.68 543.0,292.67 541.0,292.65 539.0,292.63 537.0,292.60 535.0,292.56 533.0,292.52 531.0,292.48 529.0,292.43 527.0,292.38 525.0,292.32 523.0,292.26 521.0,292.19 519.0,292.12 517.0,292.04 515.0,291.96 513.0,291.87 511.0,291.78 509.0,291.68 507.0,291.58 505.0,291.48 503.0,291.37 501.0,291.25 499.0,291.13 497.0,291.01 495.0,290.89 493.0,290.75 491.0,290.62 489.0,290.48 487.0,290.33 485.0,290.19 483.0,290.03 481.0,289.88 479.0,289.72 477.0,289.55 475.0,289.38 473.0,289.21 471.0,289.04 469.0,288.86 467.0,288.67 465.0,288.49 463.0,288.30 461.0,288.10 459.0,287.91 457.0,287.70 455.0,287.50 453.0,287.29 451.0,287.08 449.0,286.87 447.0,286.65 445.0,286.43 443.0,286.21 441.0,285.99 439.0,285.76 437.0,285.53 435.0,285.30 433.0,285.06 431.0,284.82 429.0,284.58 427.0,284.34 425.0,284.10 423.0,283.85 421.0,283.60 419.0,283.35 417.0,283.10 415.0,282.84 413.0,282.58 411.0,282.33 409.0,282.07 407.0,281.81 405.0,281.54 403.0,281.28 401.0,281.02 399.0,280.75 397.0,280.48 395.0,280.21 393.0,279.95 391.0,279.68 389.0,279.41 387.0,279.13 385.0,278.86 383.0,278.59 381.0,278.32 379.0,278.05 377.0,277.77 375.0,277.50 373.0,277.50 371.0,277.50 369.0,277.50 367.0,277.50 365.0,277.50 363.0,277.50 361.0,277.50 359.0,277.50 357.0,277.50 355.0,277.50 353.0,277.50 351.0,277.50 349.0,277.50 347.0,277.50 345.0,277.50 343.0,277.50 341.0,277.50 339.0,277.50 337.0,277.50" fill="url(#st6)"/><path d="M337.0,276.7 L342.4,276.2 L352.6,276.7 L342.4,277.2 Z M352.6,276.7 L362.8,276.2 L373.0,276.7 L362.8,277.2 Z M373.0,276.7 L383.1,275.8 L393.3,276.7 L383.1,277.6 Z M393.3,276.7 L403.5,273.1 L413.7,276.7 L403.5,280.3 Z M413.7,276.7 L423.9,270.4 L434.0,276.7 L423.9,283.0 Z M434.0,276.7 L444.2,268.1 L454.4,276.7 L444.2,285.3 Z M454.4,276.7 L464.5,266.0 L474.7,276.7 L464.5,287.4 Z M474.7,276.7 L484.9,264.2 L495.1,276.7 L484.9,289.2 Z M495.1,276.7 L505.2,262.9 L515.4,276.7 L505.2,290.5 Z M515.4,276.7 L525.6,262.1 L535.8,276.7 L525.6,291.3 Z M535.8,276.7 L546.0,261.7 L556.1,276.7 L546.0,291.7 Z M556.1,276.7 L566.3,261.9 L576.5,276.7 L566.3,291.5 Z M576.5,276.7 L586.6,262.7 L596.8,276.7 L586.6,290.7 Z M596.8,276.7 L607.0,263.4 L617.2,276.7 L607.0,290.0 Z M617.2,276.7 L627.4,263.5 L637.5,276.7 L627.4,289.9 Z M637.5,276.7 L647.7,263.5 L657.9,276.7 L647.7,289.9 Z M657.9,276.7 L668.0,263.5 L678.2,276.7 L668.0,289.9 Z M678.2,276.7 L688.4,263.5 L698.6,276.7 L688.4,289.9 Z M698.6,276.7 L708.8,263.5 L718.9,276.7 L708.8,289.9 Z M718.9,276.7 L729.1,263.5 L739.3,276.7 L729.1,289.9 Z M739.3,276.7 L749.5,263.5 L759.6,276.7 L749.5,289.9 Z M759.6,276.7 L769.8,263.5 L780.0,276.7 L769.8,289.9 Z M780.0,276.7 L790.1,263.5 L790.0,276.7 L790.1,289.9 Z" fill="#a862f2"/><path d="M337.0,276.7 H790.0" stroke="#a862f2" stroke-width="1.2"/><rect x="788.8" y="258.1" width="1.4" height="35.1" fill="#a862f2"/><path d="M339,273.2 L341,279.7 L343,273.7 L345,279.2 L347,274.7" fill="none" stroke="#a862f2" stroke-width="1.4"/><path d="M326,339.6 H337.0 V320.5" fill="none" stroke="#8282fa" stroke-width="1.2"/><polygon points="337.0,321.70 339.0,321.70 341.0,321.70 343.0,321.70 345.0,321.70 347.0,321.70 349.0,321.70 351.0,321.70 353.0,321.70 355.0,321.70 357.0,321.70 359.0,321.70 361.0,321.70 363.0,321.70 365.0,321.70 367.0,321.70 369.0,321.70 371.0,321.70 373.0,321.70 375.0,321.70 377.0,321.43 379.0,321.15 381.0,320.88 383.0,320.61 385.0,320.34 387.0,320.07 389.0,319.79 391.0,319.52 393.0,319.25 395.0,318.99 397.0,318.72 399.0,318.45 401.0,318.18 403.0,317.92 405.0,317.66 407.0,317.39 409.0,317.13 411.0,316.87 413.0,316.62 415.0,316.36 417.0,316.10 419.0,315.85 421.0,315.60 423.0,315.35 425.0,315.10 427.0,314.86 429.0,314.62 431.0,314.38 433.0,314.14 435.0,313.90 437.0,313.67 439.0,313.44 441.0,313.21 443.0,312.99 445.0,312.77 447.0,312.55 449.0,312.33 451.0,312.12 453.0,311.91 455.0,311.70 457.0,311.50 459.0,311.29 461.0,311.10 463.0,310.90 465.0,310.71 467.0,310.53 469.0,310.34 471.0,310.16 473.0,309.99 475.0,309.82 477.0,309.65 479.0,309.48 481.0,309.32 483.0,309.17 485.0,309.01 487.0,308.87 489.0,308.72 491.0,308.58 493.0,308.45 495.0,308.31 497.0,308.19 499.0,308.07 501.0,307.95 503.0,307.83 505.0,307.72 507.0,307.62 509.0,307.52 511.0,307.42 513.0,307.33 515.0,307.24 517.0,307.16 519.0,307.08 521.0,307.01 523.0,306.94 525.0,306.88 527.0,306.82 529.0,306.77 531.0,306.72 533.0,306.68 535.0,306.64 537.0,306.60 539.0,306.57 541.0,306.55 543.0,306.53 545.0,306.52 547.0,306.51 549.0,306.50 551.0,306.50 553.0,306.51 555.0,306.52 557.0,306.54 559.0,306.57 561.0,306.61 563.0,306.65 565.0,306.70 567.0,306.75 569.0,306.81 571.0,306.87 573.0,306.94 575.0,307.01 577.0,307.08 579.0,307.16 581.0,307.24 583.0,307.32 585.0,307.40 587.0,307.48 589.0,307.56 591.0,307.64 593.0,307.72 595.0,307.79 597.0,307.86 599.0,307.93 601.0,307.99 603.0,308.05 605.0,308.10 607.0,308.15 609.0,308.19 611.0,308.23 613.0,308.26 615.0,308.28 617.0,308.29 619.0,308.30 621.0,308.30 623.0,308.30 625.0,308.30 627.0,308.30 629.0,308.30 631.0,308.30 633.0,308.30 635.0,308.30 637.0,308.30 639.0,308.30 641.0,308.30 643.0,308.30 645.0,308.30 647.0,308.30 649.0,308.30 651.0,308.30 653.0,308.30 655.0,308.30 657.0,308.30 659.0,308.30 661.0,308.30 663.0,308.30 665.0,308.30 667.0,308.30 669.0,308.30 671.0,308.30 673.0,308.30 675.0,308.30 677.0,308.30 679.0,308.30 681.0,308.30 683.0,308.30 685.0,308.30 687.0,308.30 689.0,308.30 691.0,308.30 693.0,308.30 695.0,308.30 697.0,308.30 699.0,308.30 701.0,308.30 703.0,308.30 705.0,308.30 707.0,308.30 709.0,308.30 711.0,308.30 713.0,308.30 715.0,308.30 717.0,308.30 719.0,308.30 721.0,308.30 723.0,308.30 725.0,308.30 727.0,308.30 729.0,308.30 731.0,308.30 733.0,308.30 735.0,308.30 737.0,308.30 739.0,308.30 741.0,308.30 743.0,308.30 745.0,308.30 747.0,308.30 749.0,308.30 751.0,308.30 753.0,308.30 755.0,308.30 757.0,308.30 759.0,308.30 761.0,308.30 763.0,308.30 765.0,308.30 767.0,308.30 769.0,308.30 771.0,308.30 773.0,308.30 775.0,308.30 777.0,308.30 779.0,308.30 781.0,308.30 783.0,308.30 785.0,308.30 787.0,308.30 789.0,308.30 789.0,336.70 787.0,336.70 785.0,336.70 783.0,336.70 781.0,336.70 779.0,336.70 777.0,336.70 775.0,336.70 773.0,336.70 771.0,336.70 769.0,336.70 767.0,336.70 765.0,336.70 763.0,336.70 761.0,336.70 759.0,336.70 757.0,336.70 755.0,336.70 753.0,336.70 751.0,336.70 749.0,336.70 747.0,336.70 745.0,336.70 743.0,336.70 741.0,336.70 739.0,336.70 737.0,336.70 735.0,336.70 733.0,336.70 731.0,336.70 729.0,336.70 727.0,336.70 725.0,336.70 723.0,336.70 721.0,336.70 719.0,336.70 717.0,336.70 715.0,336.70 713.0,336.70 711.0,336.70 709.0,336.70 707.0,336.70 705.0,336.70 703.0,336.70 701.0,336.70 699.0,336.70 697.0,336.70 695.0,336.70 693.0,336.70 691.0,336.70 689.0,336.70 687.0,336.70 685.0,336.70 683.0,336.70 681.0,336.70 679.0,336.70 677.0,336.70 675.0,336.70 673.0,336.70 671.0,336.70 669.0,336.70 667.0,336.70 665.0,336.70 663.0,336.70 661.0,336.70 659.0,336.70 657.0,336.70 655.0,336.70 653.0,336.70 651.0,336.70 649.0,336.70 647.0,336.70 645.0,336.70 643.0,336.70 641.0,336.70 639.0,336.70 637.0,336.70 635.0,336.70 633.0,336.70 631.0,336.70 629.0,336.70 627.0,336.70 625.0,336.70 623.0,336.70 621.0,336.70 619.0,336.70 617.0,336.71 615.0,336.72 613.0,336.74 611.0,336.77 609.0,336.81 607.0,336.85 605.0,336.90 603.0,336.95 601.0,337.01 599.0,337.07 597.0,337.14 595.0,337.21 593.0,337.28 591.0,337.36 589.0,337.44 587.0,337.52 585.0,337.60 583.0,337.68 581.0,337.76 579.0,337.84 577.0,337.92 575.0,337.99 573.0,338.06 571.0,338.13 569.0,338.19 567.0,338.25 565.0,338.30 563.0,338.35 561.0,338.39 559.0,338.43 557.0,338.46 555.0,338.48 553.0,338.49 551.0,338.50 549.0,338.50 547.0,338.49 545.0,338.48 543.0,338.47 541.0,338.45 539.0,338.43 537.0,338.40 535.0,338.36 533.0,338.32 531.0,338.28 529.0,338.23 527.0,338.18 525.0,338.12 523.0,338.06 521.0,337.99 519.0,337.92 517.0,337.84 515.0,337.76 513.0,337.67 511.0,337.58 509.0,337.48 507.0,337.38 505.0,337.28 503.0,337.17 501.0,337.05 499.0,336.93 497.0,336.81 495.0,336.69 493.0,336.55 491.0,336.42 489.0,336.28 487.0,336.13 485.0,335.99 483.0,335.83 481.0,335.68 479.0,335.52 477.0,335.35 475.0,335.18 473.0,335.01 471.0,334.84 469.0,334.66 467.0,334.47 465.0,334.29 463.0,334.10 461.0,333.90 459.0,333.71 457.0,333.50 455.0,333.30 453.0,333.09 451.0,332.88 449.0,332.67 447.0,332.45 445.0,332.23 443.0,332.01 441.0,331.79 439.0,331.56 437.0,331.33 435.0,331.10 433.0,330.86 431.0,330.62 429.0,330.38 427.0,330.14 425.0,329.90 423.0,329.65 421.0,329.40 419.0,329.15 417.0,328.90 415.0,328.64 413.0,328.38 411.0,328.13 409.0,327.87 407.0,327.61 405.0,327.34 403.0,327.08 401.0,326.82 399.0,326.55 397.0,326.28 395.0,326.01 393.0,325.75 391.0,325.48 389.0,325.21 387.0,324.93 385.0,324.66 383.0,324.39 381.0,324.12 379.0,323.85 377.0,323.57 375.0,323.30 373.0,323.30 371.0,323.30 369.0,323.30 367.0,323.30 365.0,323.30 363.0,323.30 361.0,323.30 359.0,323.30 357.0,323.30 355.0,323.30 353.0,323.30 351.0,323.30 349.0,323.30 347.0,323.30 345.0,323.30 343.0,323.30 341.0,323.30 339.0,323.30 337.0,323.30" fill="url(#st5)"/><path d="M337.0,322.5 L342.4,322.0 L352.6,322.5 L342.4,323.0 Z M352.6,322.5 L362.8,322.0 L373.0,322.5 L362.8,323.0 Z M373.0,322.5 L383.1,321.6 L393.3,322.5 L383.1,323.4 Z M393.3,322.5 L403.5,318.9 L413.7,322.5 L403.5,326.1 Z M413.7,322.5 L423.9,316.2 L434.0,322.5 L423.9,328.8 Z M434.0,322.5 L444.2,313.9 L454.4,322.5 L444.2,331.1 Z M454.4,322.5 L464.5,311.8 L474.7,322.5 L464.5,333.2 Z M474.7,322.5 L484.9,310.0 L495.1,322.5 L484.9,335.0 Z M495.1,322.5 L505.2,308.7 L515.4,322.5 L505.2,336.3 Z M515.4,322.5 L525.6,307.9 L535.8,322.5 L525.6,337.1 Z M535.8,322.5 L546.0,307.5 L556.1,322.5 L546.0,337.5 Z M556.1,322.5 L566.3,307.7 L576.5,322.5 L566.3,337.3 Z M576.5,322.5 L586.6,308.5 L596.8,322.5 L586.6,336.5 Z M596.8,322.5 L607.0,309.2 L617.2,322.5 L607.0,335.8 Z M617.2,322.5 L627.4,309.3 L637.5,322.5 L627.4,335.7 Z M637.5,322.5 L647.7,309.3 L657.9,322.5 L647.7,335.7 Z M657.9,322.5 L668.0,309.3 L678.2,322.5 L668.0,335.7 Z M678.2,322.5 L688.4,309.3 L698.6,322.5 L688.4,335.7 Z M698.6,322.5 L708.8,309.3 L718.9,322.5 L708.8,335.7 Z M718.9,322.5 L729.1,309.3 L739.3,322.5 L729.1,335.7 Z M739.3,322.5 L749.5,309.3 L759.6,322.5 L749.5,335.7 Z M759.6,322.5 L769.8,309.3 L780.0,322.5 L769.8,335.7 Z M780.0,322.5 L790.1,309.3 L790.0,322.5 L790.1,335.7 Z" fill="#8282fa"/><path d="M337.0,322.5 H790.0" stroke="#8282fa" stroke-width="1.2"/><rect x="788.8" y="303.9" width="1.4" height="35.1" fill="#8282fa"/><path d="M339,319.0 L341,325.5 L343,319.5 L345,325.0 L347,320.5" fill="none" stroke="#8282fa" stroke-width="1.4"/><path d="M326,385.1 H337 V377.5 L337.0,377.5 L337.5,374.2 L338.0,376.3 L338.5,377.0 L339.0,381.8 L339.5,377.4 L340.0,373.7 L340.5,372.0 L341.0,374.9 L341.5,371.3 L342.0,369.0 L342.5,370.2 L343.0,370.2 L343.5,370.8 L344.0,374.1 L344.5,367.5 L345.0,366.1 L345.5,365.2 L346.0,369.0 L346.5,370.0 L347.0,366.9 L347.5,367.9 L348.0,362.9 L348.5,363.3 L349.0,365.5 L349.5,365.7 L350.0,366.5 L350.5,365.7 L351.0,366.2 L351.5,370.2 L352.0,370.9 L352.5,371.4 L353.0,365.8 L353.5,368.7 L354.0,365.8 L354.5,370.4 L355.0,369.2 L355.5,369.0 L356.0,367.1 L356.5,362.8 L357.0,365.8 L357.5,366.4 L358.0,367.3 L358.5,369.6 L359.0,366.1 L359.5,364.6 L360.0,370.2 L360.5,367.4 L361.0,365.5 L361.5,365.9 L362.0,365.2 L362.5,367.5 L363.0,369.5 L363.5,370.4 L364.0,368.0 L364.5,366.3 L365.0,365.6 L365.5,369.4 L366.0,370.4 L366.5,370.9 L367.0,367.9 L367.5,369.0 L368.0,364.2 L368.5,367.4 L369.0,367.3 L369.5,368.4 L370.0,368.7 L370.5,367.7 L371.0,366.6 L371.5,369.5 L372.0,366.1 L372.5,367.2 L373.0,363.6 L373.5,370.2 L374.0,372.5 L374.5,367.3 L375.0,369.6 L375.5,365.0 L376.0,366.4 L376.5,371.6 L377.0,369.0 L377.5,371.1 L378.0,370.9 L378.5,373.6 L379.0,376.2 L379.5,374.7 L380.0,371.9 L380.5,372.8 L381.0,370.9 L381.5,373.9 L382.0,373.6 L382.5,373.5 L383.0,373.3 L383.5,370.7 L384.0,368.1 L384.5,373.9 L385.0,370.7 L385.5,368.6 L386.0,368.5 L386.5,369.9 L387.0,367.4 L387.5,366.4 L388.0,370.2 L388.5,370.2 L389.0,367.6 L389.5,366.3 L390.0,365.8 L390.5,365.6 L391.0,368.9 L391.5,364.4 L392.0,369.3 L392.5,366.3 L393.0,368.8 L393.5,366.7 L394.0,368.4 L394.5,366.8 L395.0,368.8 L395.5,371.3 L396.0,366.2 L396.5,370.4 L397.0,364.5 L397.5,365.9 L398.0,369.4 L398.5,367.3 L399.0,367.4 L399.5,367.2 L400.0,365.9 L400.5,366.5 L401.0,368.5 L401.5,370.2 L402.0,369.5 L402.5,364.2 L403.0,364.0 L403.5,365.5 L404.0,366.6 L404.5,367.1 L405.0,366.8 L405.5,369.2 L406.0,368.9 L406.5,371.1 L407.0,368.4 L407.5,368.2 L408.0,369.6 L408.5,364.7 L409.0,371.2 L409.5,369.4 L410.0,367.1 L410.5,368.7 L411.0,367.2 L411.5,366.4 L412.0,369.2 L412.5,367.2 L413.0,365.6 L413.5,364.9 L414.0,370.9 L414.5,368.4 L415.0,373.7 L415.5,372.7 L416.0,371.7 L416.5,366.2 L417.0,369.6 L417.5,367.6 L418.0,367.4 L418.5,367.4 L419.0,368.4 L419.5,364.8 L420.0,366.8 L420.5,372.7 L421.0,375.4 L421.5,375.1 L422.0,373.4 L422.5,370.4 L423.0,374.6 L423.5,371.8 L424.0,369.2 L424.5,371.0 L425.0,368.6 L425.5,369.9 L426.0,369.7 L426.5,372.5 L427.0,369.5 L427.5,370.3 L428.0,369.8 L428.5,371.0 L429.0,373.1 L429.5,373.1 L430.0,372.0 L430.5,369.7 L431.0,365.3 L431.5,370.0 L432.0,368.3 L432.5,366.0 L433.0,363.5 L433.5,368.1 L434.0,368.2 L434.5,369.6 L435.0,366.1 L435.5,371.0 L436.0,366.6 L436.5,368.6 L437.0,372.6 L437.5,371.3 L438.0,368.7 L438.5,367.2 L439.0,368.6 L439.5,363.4 L440.0,365.6 L440.5,363.9 L441.0,363.0 L441.5,370.8 L442.0,370.3 L442.5,371.7 L443.0,367.0 L443.5,368.5 L444.0,366.7 L444.5,371.1 L445.0,367.4 L445.5,365.0 L446.0,366.5 L446.5,364.0 L447.0,363.5 L447.5,368.2 L448.0,369.4 L448.5,369.4 L449.0,369.8 L449.5,370.0 L450.0,372.1 L450.5,372.6 L451.0,366.6 L451.5,364.2 L452.0,364.2 L452.5,365.9 L453.0,363.1 L453.5,363.8 L454.0,364.4 L454.5,368.7 L455.0,367.9 L455.5,368.5 L456.0,367.1 L456.5,370.5 L457.0,372.2 L457.5,365.1 L458.0,368.4 L458.5,366.1 L459.0,370.1 L459.5,364.6 L460.0,361.8 L460.5,363.3 L461.0,367.3 L461.5,365.7 L462.0,368.9 L462.5,370.0 L463.0,364.2 L463.5,371.3 L464.0,371.1 L464.5,372.1 L465.0,369.4 L465.5,366.7 L466.0,366.1 L466.5,365.8 L467.0,367.2 L467.5,366.4 L468.0,364.2 L468.5,365.4 L469.0,370.6 L469.5,376.0 L470.0,377.0 L470.5,372.1 L471.0,371.5 L471.5,371.8 L472.0,378.3 L472.5,375.5 L473.0,372.1 L473.5,373.3 L474.0,370.9 L474.5,370.8 L475.0,372.9 L475.5,369.0 L476.0,368.8 L476.5,363.7 L477.0,366.7 L477.5,365.9 L478.0,366.4 L478.5,371.9 L479.0,367.7 L479.5,368.3 L480.0,367.9 L480.5,371.0 L481.0,367.5 L481.5,368.1 L482.0,369.2 L482.5,367.4 L483.0,367.8 L483.5,367.4 L484.0,368.0 L484.5,367.3 L485.0,367.6 L485.5,364.6 L486.0,369.8 L486.5,367.3 L487.0,368.0 L487.5,365.8 L488.0,367.8 L488.5,367.9 L489.0,372.2 L489.5,367.3 L490.0,369.7 L490.5,367.3 L491.0,372.0 L491.5,369.6 L492.0,375.0 L492.5,373.1 L493.0,373.5 L493.5,377.6 L494.0,376.8 L494.5,380.4 L495.0,375.4 L495.5,378.7 L496.0,380.3 L496.5,376.7 L497.0,376.4 L497.5,378.3 L498.0,374.5 L498.5,372.0 L499.0,375.0 L499.5,373.1 L500.0,371.7 L500.5,372.9 L501.0,370.3 L501.5,368.3 L502.0,367.1 L502.5,367.7 L503.0,366.6 L503.5,369.8 L504.0,364.5 L504.5,367.8 L505.0,370.7 L505.5,371.6 L506.0,367.3 L506.5,363.4 L507.0,369.0 L507.5,365.3 L508.0,370.8 L508.5,365.2 L509.0,369.8 L509.5,368.7 L510.0,366.7 L510.5,370.5 L511.0,370.2 L511.5,364.8 L512.0,368.5 L512.5,367.5 L513.0,367.3 L513.5,371.5 L514.0,369.8 L514.5,363.9 L515.0,369.4 L515.5,365.2 L516.0,371.5 L516.5,367.7 L517.0,368.9 L517.5,364.8 L518.0,364.4 L518.5,370.8 L519.0,372.4 L519.5,368.9 L520.0,364.9 L520.5,368.7 L521.0,366.0 L521.5,370.3 L522.0,370.3 L522.5,367.1 L523.0,366.9 L523.5,363.7 L524.0,371.1 L524.5,367.2 L525.0,366.4 L525.5,366.6 L526.0,368.8 L526.5,370.3 L527.0,371.5 L527.5,367.9 L528.0,368.0 L528.5,368.1 L529.0,368.5 L529.5,368.4 L530.0,365.3 L530.5,363.6 L531.0,363.5 L531.5,367.3 L532.0,365.7 L532.5,366.2 L533.0,367.7 L533.5,371.5 L534.0,367.8 L534.5,369.0 L535.0,367.1 L535.5,367.2 L536.0,364.2 L536.5,367.0 L537.0,365.9 L537.5,369.8 L538.0,366.2 L538.5,366.0 L539.0,364.5 L539.5,366.8 L540.0,368.5 L540.5,368.5 L541.0,373.2 L541.5,368.1 L542.0,366.1 L542.5,365.6 L543.0,367.5 L543.5,370.2 L544.0,366.8 L544.5,368.8 L545.0,373.0 L545.5,369.4 L546.0,377.5 L546.5,376.5 L547.0,379.6 L547.5,373.7 L548.0,373.7 L548.5,376.7 L549.0,377.8 L549.5,376.5 L550.0,370.4 L550.5,372.9 L551.0,371.3 L551.5,371.1 L552.0,374.9 L552.5,371.1 L553.0,372.5 L553.5,369.6 L554.0,369.4 L554.5,371.1 L555.0,370.5 L555.5,369.7 L556.0,369.0 L556.5,368.9 L557.0,367.1 L557.5,369.2 L558.0,362.5 L558.5,363.1 L559.0,363.2 L559.5,366.0 L560.0,367.7 L560.5,368.7 L561.0,369.3 L561.5,365.6 L562.0,371.6 L562.5,368.0 L563.0,370.8 L563.5,368.8 L564.0,366.6 L564.5,365.9 L565.0,368.6 L565.5,364.4 L566.0,367.4 L566.5,363.7 L567.0,369.0 L567.5,366.5 L568.0,370.1 L568.5,368.6 L569.0,370.5 L569.5,371.0 L570.0,370.4 L570.5,366.0 L571.0,366.7 L571.5,369.1 L572.0,366.3 L572.5,367.6 L573.0,366.5 L573.5,369.6 L574.0,370.8 L574.5,372.7 L575.0,368.9 L575.5,375.6 L576.0,375.2 L576.5,374.6 L577.0,377.3 L577.5,375.0 L578.0,373.0 L578.5,372.7 L579.0,375.3 L579.5,371.7 L580.0,373.2 L580.5,373.8 L581.0,369.4 L581.5,372.3 L582.0,374.3 L582.5,371.5 L583.0,366.8 L583.5,372.0 L584.0,366.8 L584.5,366.0 L585.0,365.1 L585.5,363.1 L586.0,365.8 L586.5,366.3 L587.0,368.1 L587.5,366.3 L588.0,368.4 L588.5,365.1 L589.0,366.7 L589.5,370.5 L590.0,369.8 L590.5,367.2 L591.0,366.7 L591.5,362.8 L592.0,369.4 L592.5,364.5 L593.0,368.3 L593.5,364.0 L594.0,368.2 L594.5,366.4 L595.0,365.3 L595.5,368.7 L596.0,368.9 L596.5,367.2 L597.0,364.0 L597.5,365.4 L598.0,365.5 L598.5,371.0 L599.0,366.0 L599.5,368.3 L600.0,365.1 L600.5,366.4 L601.0,367.5 L601.5,367.1 L602.0,365.8 L602.5,368.0 L603.0,367.3 L603.5,370.8 L604.0,370.2 L604.5,364.9 L605.0,365.4 L605.5,369.8 L606.0,371.2 L606.5,371.1 L607.0,369.6 L607.5,366.4 L608.0,367.1 L608.5,365.6 L609.0,371.5 L609.5,366.7 L610.0,370.2 L610.5,366.5 L611.0,366.9 L611.5,366.8 L612.0,366.2 L612.5,364.8 L613.0,368.5 L613.5,365.9 L614.0,364.6 L614.5,365.4 L615.0,367.9 L615.5,368.3 L616.0,369.8 L616.5,365.2 L617.0,367.8 L617.5,371.4 L618.0,369.1 L618.5,367.6 L619.0,365.5 L619.5,366.2 L620.0,368.3 L620.5,368.5 L621.0,367.7 L621.5,368.1 L622.0,369.5 L622.5,370.8 L623.0,369.1 L623.5,366.7 L624.0,366.8 L624.5,366.5 L625.0,366.7 L625.5,366.4 L626.0,366.3 L626.5,364.8 L627.0,367.2 L627.5,369.1 L628.0,369.6 L628.5,368.1 L629.0,367.7 L629.5,369.5 L630.0,370.1 L630.5,369.0 L631.0,365.8 L631.5,368.8 L632.0,367.4 L632.5,364.8 L633.0,368.6 L633.5,368.8 L634.0,366.1 L634.5,366.8 L635.0,365.5 L635.5,364.8 L636.0,365.8 L636.5,368.3 L637.0,367.9 L637.5,365.8 L638.0,365.6 L638.5,366.4 L639.0,372.5 L639.5,371.7 L640.0,374.8 L640.5,372.6 L641.0,376.0 L641.5,373.2 L642.0,380.0 L642.5,374.3 L643.0,372.0 L643.5,373.5 L644.0,372.4 L644.5,374.9 L645.0,371.5 L645.5,371.1 L646.0,368.8 L646.5,369.7 L647.0,368.9 L647.5,370.5 L648.0,368.9 L648.5,368.2 L649.0,366.9 L649.5,370.6 L650.0,368.5 L650.5,366.4 L651.0,364.4 L651.5,367.3 L652.0,367.0 L652.5,370.6 L653.0,370.9 L653.5,371.2 L654.0,368.8 L654.5,364.9 L655.0,370.3 L655.5,371.2 L656.0,364.6 L656.5,368.9 L657.0,366.0 L657.5,367.3 L658.0,371.3 L658.5,370.5 L659.0,367.9 L659.5,365.4 L660.0,367.4 L660.5,368.9 L661.0,371.5 L661.5,367.8 L662.0,364.7 L662.5,369.1 L663.0,366.4 L663.5,370.5 L664.0,371.3 L664.5,369.7 L665.0,371.6 L665.5,368.4 L666.0,370.7 L666.5,375.7 L667.0,371.9 L667.5,370.6 L668.0,372.8 L668.5,369.0 L669.0,369.5 L669.5,369.3 L670.0,367.6 L670.5,368.1 L671.0,368.4 L671.5,374.4 L672.0,373.4 L672.5,370.1 L673.0,373.0 L673.5,368.7 L674.0,370.0 L674.5,371.5 L675.0,371.7 L675.5,369.6 L676.0,367.5 L676.5,364.9 L677.0,370.1 L677.5,368.1 L678.0,364.5 L678.5,365.3 L679.0,368.3 L679.5,367.7 L680.0,372.6 L680.5,371.6 L681.0,369.5 L681.5,369.1 L682.0,367.5 L682.5,370.0 L683.0,364.1 L683.5,369.0 L684.0,364.5 L684.5,363.5 L685.0,367.2 L685.5,369.8 L686.0,370.8 L686.5,367.7 L687.0,368.5 L687.5,368.8 L688.0,371.4 L688.5,370.5 L689.0,368.6 L689.5,364.8 L690.0,367.8 L690.5,369.0 L691.0,364.4 L691.5,364.0 L692.0,367.8 L692.5,367.2 L693.0,368.5 L693.5,369.7 L694.0,372.7 L694.5,368.2 L695.0,369.0 L695.5,367.5 L696.0,371.1 L696.5,366.6 L697.0,369.6 L697.5,366.6 L698.0,365.9 L698.5,368.4 L699.0,368.7 L699.5,367.0 L700.0,367.1 L700.5,369.3 L701.0,367.5 L701.5,370.1 L702.0,370.5 L702.5,368.1 L703.0,367.9 L703.5,367.7 L704.0,363.2 L704.5,368.8 L705.0,365.8 L705.5,368.1 L706.0,364.5 L706.5,364.2 L707.0,371.7 L707.5,367.1 L708.0,373.1 L708.5,368.1 L709.0,365.8 L709.5,366.1 L710.0,368.5 L710.5,365.6 L711.0,364.3 L711.5,362.1 L712.0,368.7 L712.5,368.7 L713.0,366.5 L713.5,365.3 L714.0,369.8 L714.5,367.4 L715.0,365.9 L715.5,372.9 L716.0,372.3 L716.5,369.9 L717.0,364.1 L717.5,367.4 L718.0,364.5 L718.5,367.2 L719.0,364.4 L719.5,362.9 L720.0,366.2 L720.5,364.8 L721.0,370.1 L721.5,370.7 L722.0,366.7 L722.5,366.7 L723.0,368.1 L723.5,369.3 L724.0,373.3 L724.5,368.7 L725.0,369.1 L725.5,372.5 L726.0,376.1 L726.5,377.2 L727.0,374.0 L727.5,370.6 L728.0,374.1 L728.5,372.6 L729.0,373.3 L729.5,369.9 L730.0,370.1 L730.5,367.6 L731.0,368.0 L731.5,366.7 L732.0,369.3 L732.5,369.8 L733.0,363.1 L733.5,362.9 L734.0,364.9 L734.5,370.9 L735.0,371.4 L735.5,370.6 L736.0,367.1 L736.5,364.7 L737.0,365.5 L737.5,367.3 L738.0,366.6 L738.5,365.2 L739.0,363.7 L739.5,364.0 L740.0,370.8 L740.5,365.8 L741.0,369.5 L741.5,365.3 L742.0,367.5 L742.5,369.4 L743.0,370.1 L743.5,366.9 L744.0,367.8 L744.5,363.3 L745.0,367.9 L745.5,368.4 L746.0,365.5 L746.5,364.2 L747.0,364.3 L747.5,368.0 L748.0,369.1 L748.5,367.0 L749.0,368.4 L749.5,364.5 L750.0,365.1 L750.5,369.6 L751.0,367.2 L751.5,369.1 L752.0,365.5 L752.5,363.7 L753.0,369.4 L753.5,371.5 L754.0,369.2 L754.5,369.9 L755.0,365.8 L755.5,367.1 L756.0,365.7 L756.5,367.6 L757.0,369.0 L757.5,371.1 L758.0,364.7 L758.5,368.2 L759.0,372.3 L759.5,374.2 L760.0,371.5 L760.5,371.5 L761.0,373.2 L761.5,371.3 L762.0,376.2 L762.5,374.4 L763.0,371.5 L763.5,371.2 L764.0,376.2 L764.5,374.8 L765.0,374.8 L765.5,371.5 L766.0,369.4 L766.5,370.7 L767.0,368.0 L767.5,367.5 L768.0,368.1 L768.5,370.2 L769.0,368.6 L769.5,370.1 L770.0,369.1 L770.5,372.4 L771.0,370.8 L771.5,370.1 L772.0,365.5 L772.5,368.8 L773.0,367.9 L773.5,365.2 L774.0,368.1 L774.5,363.8 L775.0,363.9 L775.5,369.6 L776.0,370.8 L776.5,370.1 L777.0,367.4 L777.5,362.2 L778.0,366.7 L778.5,369.9 L779.0,370.1 L779.5,368.7 L780.0,362.3 L780.5,368.6 L781.0,374.9 L781.5,370.3 L782.0,364.6 L782.5,359.5 L783.0,368.6 L783.5,375.4 L784.0,372.8 L784.5,367.0 L785.0,364.4 L785.5,372.8 L786.0,375.7 L786.5,372.2 L787.0,361.3 L787.5,362.5 L788.0,370.2 L788.5,372.2 L789.0,369.2 L789.5,361.2 L790.0,358.8" fill="none" stroke="#5b90f4" stroke-width="0.95" stroke-linejoin="bevel"/><path d="M787.5,368.7 L788.2,349.2 L788.8,383.7 L789.4,351.7 L790,374.7" fill="none" stroke="#5b90f4" stroke-width="1"/><path d="M326,430.9 H337 V409.6 L337.0,409.6 L337.5,407.8 L338.0,403.7 L338.5,403.5 L339.0,404.7 L339.5,410.1 L340.0,409.7 L340.5,414.0 L341.0,414.5 L341.5,415.6 L342.0,418.0 L342.5,421.0 L343.0,411.4 L343.5,408.2 L344.0,402.8 L344.5,404.5 L345.0,406.2 L345.5,402.7 L346.0,399.8 L346.5,404.6 L347.0,408.8 L347.5,413.1 L348.0,413.2 L348.5,413.6 L349.0,414.4 L349.5,416.3 L350.0,420.2 L350.5,424.2 L351.0,420.2 L351.5,417.0 L352.0,419.8 L352.5,417.2 L353.0,417.7 L353.5,417.0 L354.0,410.1 L354.5,409.2 L355.0,410.9 L355.5,412.8 L356.0,410.6 L356.5,406.0 L357.0,407.6 L357.5,409.8 L358.0,414.7 L358.5,414.8 L359.0,412.5 L359.5,411.9 L360.0,417.2 L360.5,419.8 L361.0,422.2 L361.5,417.1 L362.0,417.6 L362.5,421.4 L363.0,424.7 L363.5,423.4 L364.0,418.7 L364.5,414.3 L365.0,414.5 L365.5,411.6 L366.0,412.6 L366.5,409.9 L367.0,408.0 L367.5,410.5 L368.0,413.8 L368.5,416.6 L369.0,415.5 L369.5,415.0 L370.0,416.4 L370.5,417.3 L371.0,420.9 L371.5,422.0 L372.0,416.1 L372.5,414.0 L373.0,415.8 L373.5,418.0 L374.0,417.4 L374.5,412.4 L375.0,410.8 L375.5,407.6 L376.0,413.4 L376.5,410.7 L377.0,407.2 L377.5,407.7 L378.0,405.3 L378.5,409.3 L379.0,405.2 L379.5,409.9 L380.0,404.4 L380.5,409.8 L381.0,411.4 L381.5,411.6 L382.0,413.9 L382.5,411.1 L383.0,412.7 L383.5,414.8 L384.0,416.8 L384.5,421.0 L385.0,416.8 L385.5,415.8 L386.0,417.8 L386.5,418.1 L387.0,418.0 L387.5,414.9 L388.0,410.6 L388.5,408.7 L389.0,407.5 L389.5,406.5 L390.0,403.9 L390.5,395.1 L391.0,402.3 L391.5,405.5 L392.0,410.1 L392.5,411.2 L393.0,408.7 L393.5,409.6 L394.0,416.2 L394.5,418.4 L395.0,417.4 L395.5,412.8 L396.0,409.3 L396.5,413.0 L397.0,410.3 L397.5,408.2 L398.0,404.2 L398.5,404.1 L399.0,403.7 L399.5,406.8 L400.0,413.1 L400.5,411.9 L401.0,413.8 L401.5,413.0 L402.0,419.3 L402.5,418.4 L403.0,419.5 L403.5,414.7 L404.0,414.6 L404.5,413.8 L405.0,414.3 L405.5,406.8 L406.0,403.2 L406.5,402.7 L407.0,406.7 L407.5,406.8 L408.0,411.2 L408.5,408.8 L409.0,408.8 L409.5,413.6 L410.0,419.6 L410.5,420.0 L411.0,424.4 L411.5,421.8 L412.0,422.7 L412.5,420.5 L413.0,420.2 L413.5,416.4 L414.0,413.1 L414.5,409.2 L415.0,411.7 L415.5,410.7 L416.0,406.9 L416.5,404.0 L417.0,407.0 L417.5,408.9 L418.0,411.6 L418.5,413.4 L419.0,413.8 L419.5,418.2 L420.0,417.5 L420.5,423.1 L421.0,427.0 L421.5,421.8 L422.0,419.2 L422.5,421.5 L423.0,420.6 L423.5,420.0 L424.0,413.8 L424.5,409.7 L425.0,406.6 L425.5,406.8 L426.0,408.0 L426.5,407.6 L427.0,409.1 L427.5,412.0 L428.0,410.9 L428.5,419.2 L429.0,417.9 L429.5,417.1 L430.0,418.2 L430.5,422.1 L431.0,421.3 L431.5,422.2 L432.0,415.7 L432.5,414.3 L433.0,408.2 L433.5,410.6 L434.0,409.1 L434.5,405.8 L435.0,402.2 L435.5,401.2 L436.0,404.3 L436.5,412.0 L437.0,411.5 L437.5,411.4 L438.0,411.7 L438.5,418.1 L439.0,419.9 L439.5,418.1 L440.0,415.4 L440.5,416.0 L441.0,413.8 L441.5,416.5 L442.0,413.5 L442.5,409.8 L443.0,408.1 L443.5,408.4 L444.0,408.7 L444.5,406.5 L445.0,406.8 L445.5,400.9 L446.0,402.6 L446.5,408.6 L447.0,409.7 L447.5,415.3 L448.0,414.6 L448.5,412.5 L449.0,420.5 L449.5,418.8 L450.0,422.4 L450.5,415.2 L451.0,418.1 L451.5,417.1 L452.0,417.7 L452.5,414.6 L453.0,409.7 L453.5,405.6 L454.0,402.5 L454.5,403.8 L455.0,408.4 L455.5,406.6 L456.0,403.4 L456.5,406.2 L457.0,406.6 L457.5,411.8 L458.0,415.7 L458.5,410.9 L459.0,416.7 L459.5,419.6 L460.0,419.8 L460.5,424.4 L461.0,418.0 L461.5,417.8 L462.0,422.4 L462.5,423.1 L463.0,422.2 L463.5,418.6 L464.0,413.8 L464.5,414.8 L465.0,411.8 L465.5,412.7 L466.0,407.0 L466.5,407.8 L467.0,407.1 L467.5,409.0 L468.0,413.2 L468.5,412.9 L469.0,410.8 L469.5,414.3 L470.0,417.1 L470.5,420.6 L471.0,424.0 L471.5,413.0 L472.0,417.9 L472.5,417.8 L473.0,422.1 L473.5,419.2 L474.0,418.7 L474.5,411.9 L475.0,414.8 L475.5,412.5 L476.0,413.3 L476.5,411.5 L477.0,407.9 L477.5,404.6 L478.0,411.5 L478.5,413.5 L479.0,411.7 L479.5,413.0 L480.0,410.5 L480.5,414.1 L481.0,419.3 L481.5,418.4 L482.0,415.8 L482.5,411.2 L483.0,415.7 L483.5,421.2 L484.0,419.3 L484.5,415.9 L485.0,411.4 L485.5,412.6 L486.0,416.7 L486.5,415.2 L487.0,410.4 L487.5,411.5 L488.0,410.1 L488.5,407.9 L489.0,409.4 L489.5,404.9 L490.0,404.7 L490.5,400.6 L491.0,404.8 L491.5,406.4 L492.0,406.4 L492.5,407.5 L493.0,407.3 L493.5,410.2 L494.0,411.7 L494.5,412.4 L495.0,411.9 L495.5,410.0 L496.0,413.5 L496.5,418.6 L497.0,417.3 L497.5,415.5 L498.0,410.4 L498.5,412.2 L499.0,409.3 L499.5,411.3 L500.0,409.1 L500.5,405.2 L501.0,402.5 L501.5,406.9 L502.0,409.2 L502.5,403.5 L503.0,409.8 L503.5,407.7 L504.0,414.1 L504.5,416.7 L505.0,414.2 L505.5,413.7 L506.0,411.5 L506.5,416.9 L507.0,416.3 L507.5,415.7 L508.0,415.1 L508.5,408.6 L509.0,411.6 L509.5,411.0 L510.0,412.9 L510.5,410.2 L511.0,409.4 L511.5,411.4 L512.0,411.0 L512.5,414.8 L513.0,416.5 L513.5,415.0 L514.0,415.0 L514.5,418.7 L515.0,421.4 L515.5,419.2 L516.0,415.7 L516.5,415.2 L517.0,412.8 L517.5,418.3 L518.0,416.9 L518.5,409.4 L519.0,410.2 L519.5,411.8 L520.0,411.1 L520.5,414.9 L521.0,412.7 L521.5,409.6 L522.0,409.9 L522.5,414.7 L523.0,415.3 L523.5,418.5 L524.0,415.3 L524.5,415.2 L525.0,419.8 L525.5,423.5 L526.0,419.3 L526.5,417.1 L527.0,414.0 L527.5,416.3 L528.0,419.7 L528.5,419.6 L529.0,413.9 L529.5,415.1 L530.0,413.3 L530.5,414.4 L531.0,414.6 L531.5,413.8 L532.0,408.1 L532.5,410.3 L533.0,413.4 L533.5,411.7 L534.0,407.3 L534.5,405.9 L535.0,408.2 L535.5,409.3 L536.0,410.2 L536.5,410.1 L537.0,407.8 L537.5,411.5 L538.0,409.9 L538.5,414.5 L539.0,415.1 L539.5,415.1 L540.0,411.8 L540.5,413.9 L541.0,417.1 L541.5,414.6 L542.0,411.4 L542.5,410.8 L543.0,410.3 L543.5,411.8 L544.0,408.8 L544.5,406.3 L545.0,403.6 L545.5,406.6 L546.0,408.8 L546.5,411.9 L547.0,409.6 L547.5,408.4 L548.0,409.0 L548.5,413.2 L549.0,416.5 L549.5,414.2 L550.0,415.2 L550.5,411.2 L551.0,414.7 L551.5,413.1 L552.0,413.5 L552.5,410.8 L553.0,409.1 L553.5,409.2 L554.0,413.6 L554.5,412.5 L555.0,411.9 L555.5,409.2 L556.0,407.1 L556.5,410.1 L557.0,410.4 L557.5,410.5 L558.0,406.5 L558.5,403.5 L559.0,406.4 L559.5,410.2 L560.0,412.4 L560.5,409.5 L561.0,406.9 L561.5,411.8 L562.0,415.2 L562.5,412.2 L563.0,415.3 L563.5,413.8 L564.0,417.1 L564.5,420.1 L565.0,421.9 L565.5,415.8 L566.0,414.9 L566.5,416.2 L567.0,419.9 L567.5,421.5 L568.0,420.7 L568.5,415.0 L569.0,413.2 L569.5,417.2 L570.0,420.3 L570.5,417.2 L571.0,410.9 L571.5,413.5 L572.0,411.7 L572.5,416.5 L573.0,415.7 L573.5,413.3 L574.0,409.5 L574.5,409.3 L575.0,414.3 L575.5,418.1 L576.0,413.6 L576.5,415.7 L577.0,412.9 L577.5,418.4 L578.0,422.4 L578.5,420.2 L579.0,414.0 L579.5,415.7 L580.0,418.4 L580.5,419.2 L581.0,417.4 L581.5,413.0 L582.0,407.6 L582.5,408.4 L583.0,411.5 L583.5,410.4 L584.0,410.6 L584.5,409.7 L585.0,410.1 L585.5,413.8 L586.0,416.1 L586.5,414.6 L587.0,411.8 L587.5,414.7 L588.0,417.0 L588.5,419.3 L589.0,413.3 L589.5,411.9 L590.0,409.3 L590.5,412.6 L591.0,413.5 L591.5,409.4 L592.0,406.9 L592.5,408.1 L593.0,409.6 L593.5,416.1 L594.0,414.7 L594.5,416.9 L595.0,414.5 L595.5,412.0 L596.0,415.1 L596.5,416.5 L597.0,413.4 L597.5,407.6 L598.0,406.6 L598.5,406.4 L599.0,406.0 L599.5,404.5 L600.0,400.5 L600.5,401.7 L601.0,409.7 L601.5,415.4 L602.0,416.2 L602.5,410.8 L603.0,414.0 L603.5,419.5 L604.0,418.4 L604.5,418.0 L605.0,413.0 L605.5,411.3 L606.0,408.7 L606.5,408.9 L607.0,408.5 L607.5,401.7 L608.0,401.7 L608.5,404.5 L609.0,410.6 L609.5,414.6 L610.0,413.3 L610.5,412.4 L611.0,413.7 L611.5,418.7 L612.0,423.2 L612.5,422.2 L613.0,415.4 L613.5,415.9 L614.0,415.5 L614.5,417.5 L615.0,415.2 L615.5,411.1 L616.0,407.5 L616.5,409.4 L617.0,412.8 L617.5,411.7 L618.0,405.2 L618.5,407.0 L619.0,409.1 L619.5,412.6 L620.0,412.4 L620.5,417.3 L621.0,415.9 L621.5,416.5 L622.0,423.1 L622.5,422.6 L623.0,422.1 L623.5,420.3 L624.0,416.7 L624.5,418.3 L625.0,418.9 L625.5,416.4 L626.0,410.9 L626.5,412.9 L627.0,406.2 L627.5,411.5 L628.0,413.7 L628.5,407.5 L629.0,408.6 L629.5,410.0 L630.0,415.0 L630.5,414.5 L631.0,416.3 L631.5,415.7 L632.0,418.6 L632.5,421.0 L633.0,421.0 L633.5,417.8 L634.0,418.4 L634.5,418.3 L635.0,417.0 L635.5,420.0 L636.0,414.1 L636.5,408.8 L637.0,410.8 L637.5,413.2 L638.0,410.1 L638.5,410.1 L639.0,406.0 L639.5,409.5 L640.0,406.4 L640.5,410.9 L641.0,410.4 L641.5,411.0 L642.0,409.6 L642.5,407.9 L643.0,413.4 L643.5,416.5 L644.0,416.0 L644.5,413.9 L645.0,414.7 L645.5,415.0 L646.0,421.0 L646.5,420.5 L647.0,415.0 L647.5,414.6 L648.0,418.2 L648.5,416.8 L649.0,411.4 L649.5,410.3 L650.0,402.0 L650.5,402.9 L651.0,407.4 L651.5,403.5 L652.0,405.3 L652.5,403.3 L653.0,411.7 L653.5,413.5 L654.0,419.4 L654.5,416.6 L655.0,415.1 L655.5,414.9 L656.0,417.3 L656.5,415.1 L657.0,411.8 L657.5,402.6 L658.0,403.5 L658.5,403.4 L659.0,405.5 L659.5,404.9 L660.0,405.1 L660.5,403.8 L661.0,408.1 L661.5,416.6 L662.0,414.2 L662.5,416.1 L663.0,417.0 L663.5,420.3 L664.0,420.4 L664.5,422.3 L665.0,421.9 L665.5,419.1 L666.0,417.2 L666.5,418.7 L667.0,417.1 L667.5,414.5 L668.0,409.3 L668.5,408.1 L669.0,410.2 L669.5,414.8 L670.0,411.1 L670.5,409.1 L671.0,407.8 L671.5,406.8 L672.0,408.8 L672.5,410.4 L673.0,408.3 L673.5,406.8 L674.0,410.5 L674.5,411.5 L675.0,415.4 L675.5,413.1 L676.0,413.5 L676.5,414.7 L677.0,419.9 L677.5,424.2 L678.0,418.9 L678.5,417.6 L679.0,413.5 L679.5,416.1 L680.0,414.1 L680.5,414.1 L681.0,407.6 L681.5,410.0 L682.0,412.5 L682.5,416.5 L683.0,418.5 L683.5,419.8 L684.0,419.3 L684.5,421.9 L685.0,422.7 L685.5,417.7 L686.0,415.0 L686.5,410.3 L687.0,410.9 L687.5,409.6 L688.0,411.0 L688.5,408.7 L689.0,410.2 L689.5,412.4 L690.0,418.8 L690.5,420.8 L691.0,420.7 L691.5,418.5 L692.0,417.0 L692.5,415.9 L693.0,416.0 L693.5,413.8 L694.0,407.3 L694.5,408.0 L695.0,408.1 L695.5,407.0 L696.0,405.4 L696.5,407.8 L697.0,406.5 L697.5,408.5 L698.0,411.6 L698.5,416.8 L699.0,416.7 L699.5,416.1 L700.0,414.2 L700.5,417.9 L701.0,421.9 L701.5,416.7 L702.0,412.2 L702.5,412.0 L703.0,411.2 L703.5,408.9 L704.0,407.7 L704.5,403.5 L705.0,400.1 L705.5,406.5 L706.0,406.5 L706.5,409.9 L707.0,409.9 L707.5,412.8 L708.0,413.0 L708.5,417.2 L709.0,418.0 L709.5,420.2 L710.0,414.9 L710.5,415.4 L711.0,419.0 L711.5,417.9 L712.0,412.8 L712.5,404.3 L713.0,405.9 L713.5,408.3 L714.0,405.5 L714.5,404.3 L715.0,403.2 L715.5,403.2 L716.0,407.8 L716.5,411.4 L717.0,416.4 L717.5,417.5 L718.0,417.5 L718.5,421.3 L719.0,420.9 L719.5,422.3 L720.0,416.0 L720.5,414.3 L721.0,409.9 L721.5,409.1 L722.0,410.9 L722.5,409.7 L723.0,407.5 L723.5,408.4 L724.0,408.2 L724.5,411.4 L725.0,415.4 L725.5,414.4 L726.0,416.1 L726.5,424.3 L727.0,425.0 L727.5,424.0 L728.0,422.4 L728.5,419.4 L729.0,417.3 L729.5,420.0 L730.0,416.3 L730.5,411.9 L731.0,407.3 L731.5,406.1 L732.0,409.8 L732.5,410.1 L733.0,406.4 L733.5,406.6 L734.0,407.1 L734.5,412.0 L735.0,417.0 L735.5,421.9 L736.0,422.6 L736.5,419.5 L737.0,422.7 L737.5,424.3 L738.0,417.1 L738.5,415.6 L739.0,409.7 L739.5,410.8 L740.0,412.1 L740.5,408.9 L741.0,405.4 L741.5,405.0 L742.0,405.7 L742.5,412.7 L743.0,412.9 L743.5,413.7 L744.0,415.9 L744.5,415.3 L745.0,420.3 L745.5,422.5 L746.0,418.4 L746.5,411.4 L747.0,419.4 L747.5,417.9 L748.0,419.2 L748.5,417.9 L749.0,416.8 L749.5,409.7 L750.0,413.7 L750.5,410.8 L751.0,409.1 L751.5,407.2 L752.0,405.0 L752.5,405.1 L753.0,407.4 L753.5,405.2 L754.0,404.9 L754.5,404.3 L755.0,406.4 L755.5,411.8 L756.0,412.7 L756.5,414.4 L757.0,415.2 L757.5,415.8 L758.0,416.0 L758.5,420.3 L759.0,415.7 L759.5,409.0 L760.0,406.5 L760.5,404.4 L761.0,408.2 L761.5,406.6 L762.0,402.4 L762.5,401.2 L763.0,406.2 L763.5,406.1 L764.0,412.2 L764.5,410.0 L765.0,407.4 L765.5,411.9 L766.0,414.8 L766.5,415.9 L767.0,416.5 L767.5,416.8 L768.0,418.4 L768.5,420.5 L769.0,420.2 L769.5,424.2 L770.0,421.9 L770.5,416.2 L771.0,421.9 L771.5,423.7 L772.0,418.6 L772.5,416.5 L773.0,413.3 L773.5,414.6 L774.0,412.1 L774.5,408.9 L775.0,405.3 L775.5,405.2 L776.0,402.1 L776.5,409.9 L777.0,412.4 L777.5,408.9 L778.0,410.0 L778.5,416.9 L779.0,423.4 L779.5,424.1 L780.0,423.2 L780.5,422.2 L781.0,418.9 L781.5,418.7 L782.0,417.9 L782.5,413.1 L783.0,410.9 L783.5,406.3 L784.0,409.9 L784.5,412.5 L785.0,415.3 L785.5,415.8 L786.0,417.1 L786.5,420.2 L787.0,424.8 L787.5,422.8 L788.0,421.8 L788.5,417.9 L789.0,416.5 L789.5,411.4 L790.0,411.0" fill="none" stroke="#38aaec" stroke-width="0.95" stroke-linejoin="bevel"/><path d="M326,476.7 H337 V458.7 L337.0,458.7 L337.5,456.7 L338.0,459.4 L338.5,459.1 L339.0,456.4 L339.5,455.1 L340.0,454.4 L340.5,458.9 L341.0,459.9 L341.5,464.2 L342.0,463.7 L342.5,460.0 L343.0,461.9 L343.5,460.7 L344.0,460.7 L344.5,456.3 L345.0,452.6 L345.5,452.6 L346.0,453.3 L346.5,454.6 L347.0,453.9 L347.5,450.2 L348.0,455.0 L348.5,459.3 L349.0,462.2 L349.5,462.4 L350.0,461.4 L350.5,462.2 L351.0,462.8 L351.5,460.6 L352.0,457.2 L352.5,456.4 L353.0,452.4 L353.5,449.4 L354.0,450.5 L354.5,452.8 L355.0,450.6 L355.5,453.3 L356.0,459.2 L356.5,461.9 L357.0,464.6 L357.5,463.3 L358.0,462.6 L358.5,461.8 L359.0,463.5 L359.5,460.9 L360.0,455.0 L360.5,454.0 L361.0,454.0 L361.5,453.8 L362.0,455.6 L362.5,453.8 L363.0,453.5 L363.5,451.6 L364.0,457.7 L364.5,460.6 L365.0,464.0 L365.5,464.6 L366.0,467.3 L366.5,467.7 L367.0,470.1 L367.5,468.5 L368.0,460.0 L368.5,455.7 L369.0,455.2 L369.5,455.3 L370.0,453.3 L370.5,455.5 L371.0,454.1 L371.5,455.9 L372.0,461.7 L372.5,466.1 L373.0,465.8 L373.5,467.7 L374.0,468.0 L374.5,465.8 L375.0,467.8 L375.5,462.8 L376.0,457.7 L376.5,451.0 L377.0,453.8 L377.5,459.5 L378.0,459.8 L378.5,462.9 L379.0,459.8 L379.5,466.8 L380.0,467.4 L380.5,468.6 L381.0,465.5 L381.5,458.8 L382.0,463.5 L382.5,458.5 L383.0,459.3 L383.5,454.2 L384.0,454.6 L384.5,454.8 L385.0,456.0 L385.5,459.4 L386.0,463.3 L386.5,463.7 L387.0,462.5 L387.5,468.5 L388.0,465.3 L388.5,463.9 L389.0,461.5 L389.5,455.4 L390.0,458.2 L390.5,454.8 L391.0,452.7 L391.5,455.7 L392.0,452.9 L392.5,454.6 L393.0,461.8 L393.5,466.0 L394.0,464.1 L394.5,460.9 L395.0,462.3 L395.5,461.8 L396.0,462.1 L396.5,459.7 L397.0,454.3 L397.5,455.1 L398.0,456.0 L398.5,455.7 L399.0,455.4 L399.5,454.0 L400.0,455.2 L400.5,453.9 L401.0,461.3 L401.5,459.9 L402.0,459.1 L402.5,457.4 L403.0,458.1 L403.5,461.9 L404.0,463.4 L404.5,463.2 L405.0,461.6 L405.5,457.1 L406.0,461.3 L406.5,459.5 L407.0,456.8 L407.5,453.7 L408.0,453.5 L408.5,452.5 L409.0,452.0 L409.5,453.7 L410.0,452.9 L410.5,448.6 L411.0,452.5 L411.5,458.7 L412.0,459.7 L412.5,462.2 L413.0,459.4 L413.5,461.4 L414.0,468.1 L414.5,464.6 L415.0,462.0 L415.5,459.0 L416.0,457.1 L416.5,458.1 L417.0,454.6 L417.5,453.7 L418.0,450.7 L418.5,453.1 L419.0,460.6 L419.5,465.3 L420.0,465.8 L420.5,468.1 L421.0,468.4 L421.5,467.1 L422.0,466.1 L422.5,467.1 L423.0,460.5 L423.5,459.5 L424.0,459.0 L424.5,461.2 L425.0,456.0 L425.5,453.7 L426.0,454.0 L426.5,454.3 L427.0,457.9 L427.5,458.1 L428.0,463.3 L428.5,459.3 L429.0,466.6 L429.5,468.2 L430.0,470.1 L430.5,468.2 L431.0,463.0 L431.5,465.4 L432.0,462.3 L432.5,463.4 L433.0,459.5 L433.5,456.2 L434.0,455.3 L434.5,456.2 L435.0,460.5 L435.5,461.8 L436.0,457.8 L436.5,459.4 L437.0,464.4 L437.5,464.7 L438.0,469.3 L438.5,463.1 L439.0,464.0 L439.5,459.4 L440.0,462.1 L440.5,459.3 L441.0,454.5 L441.5,457.0 L442.0,459.0 L442.5,458.6 L443.0,465.3 L443.5,464.0 L444.0,460.7 L444.5,458.0 L445.0,459.4 L445.5,458.2 L446.0,455.1 L446.5,457.0 L447.0,454.6 L447.5,456.9 L448.0,457.7 L448.5,465.0 L449.0,461.7 L449.5,457.3 L450.0,458.2 L450.5,459.8 L451.0,455.8 L451.5,456.9 L452.0,452.0 L452.5,455.0 L453.0,452.6 L453.5,458.4 L454.0,460.6 L454.5,458.8 L455.0,454.9 L455.5,461.7 L456.0,460.2 L456.5,459.8 L457.0,459.8 L457.5,455.9 L458.0,454.5 L458.5,455.8 L459.0,460.1 L459.5,453.6 L460.0,452.1 L460.5,454.6 L461.0,458.1 L461.5,458.8 L462.0,457.8 L462.5,456.0 L463.0,457.1 L463.5,459.6 L464.0,459.8 L464.5,462.2 L465.0,457.2 L465.5,460.2 L466.0,462.9 L466.5,462.0 L467.0,466.5 L467.5,461.6 L468.0,461.1 L468.5,458.7 L469.0,461.7 L469.5,462.4 L470.0,458.0 L470.5,456.1 L471.0,457.4 L471.5,458.4 L472.0,459.8 L472.5,457.5 L473.0,455.5 L473.5,454.9 L474.0,459.9 L474.5,459.0 L475.0,461.1 L475.5,461.5 L476.0,462.2 L476.5,462.6 L477.0,468.0 L477.5,467.3 L478.0,465.9 L478.5,463.1 L479.0,460.8 L479.5,464.8 L480.0,461.0 L480.5,458.1 L481.0,456.7 L481.5,454.8 L482.0,456.3 L482.5,457.3 L483.0,456.8 L483.5,460.6 L484.0,461.8 L484.5,464.5 L485.0,469.9 L485.5,469.8 L486.0,465.1 L486.5,462.0 L487.0,463.2 L487.5,461.6 L488.0,459.0 L488.5,453.8 L489.0,456.2 L489.5,457.0 L490.0,459.1 L490.5,462.8 L491.0,463.1 L491.5,461.3 L492.0,465.3 L492.5,463.9 L493.0,467.9 L493.5,464.7 L494.0,461.0 L494.5,458.8 L495.0,456.5 L495.5,453.6 L496.0,455.1 L496.5,454.6 L497.0,453.4 L497.5,458.8 L498.0,461.7 L498.5,461.5 L499.0,462.7 L499.5,461.9 L500.0,459.9 L500.5,462.9 L501.0,465.4 L501.5,458.0 L502.0,458.0 L502.5,455.9 L503.0,460.4 L503.5,456.8 L504.0,455.8 L504.5,454.4 L505.0,453.1 L505.5,452.1 L506.0,454.2 L506.5,452.6 L507.0,452.5 L507.5,454.5 L508.0,454.2 L508.5,460.4 L509.0,459.7 L509.5,455.1 L510.0,458.1 L510.5,459.5 L511.0,464.9 L511.5,464.8 L512.0,461.6 L512.5,458.0 L513.0,460.2 L513.5,464.0 L514.0,463.9 L514.5,461.0 L515.0,455.4 L515.5,452.8 L516.0,453.8 L516.5,453.3 L517.0,449.9 L517.5,453.3 L518.0,456.4 L518.5,457.9 L519.0,461.9 L519.5,462.8 L520.0,462.3 L520.5,462.8 L521.0,463.9 L521.5,463.2 L522.0,460.2 L522.5,459.2 L523.0,455.2 L523.5,456.3 L524.0,453.6 L524.5,451.2 L525.0,457.2 L525.5,459.7 L526.0,461.3 L526.5,467.2 L527.0,466.3 L527.5,465.8 L528.0,464.4 L528.5,465.9 L529.0,464.5 L529.5,461.7 L530.0,461.4 L530.5,457.6 L531.0,455.1 L531.5,456.9 L532.0,458.8 L532.5,460.3 L533.0,455.8 L533.5,458.6 L534.0,462.0 L534.5,463.9 L535.0,470.2 L535.5,466.4 L536.0,469.6 L536.5,465.6 L537.0,467.9 L537.5,470.4 L538.0,463.5 L538.5,459.8 L539.0,460.2 L539.5,461.4 L540.0,459.5 L540.5,460.6 L541.0,457.1 L541.5,451.9 L542.0,454.3 L542.5,458.4 L543.0,461.2 L543.5,460.3 L544.0,458.1 L544.5,461.5 L545.0,467.2 L545.5,467.8 L546.0,464.7 L546.5,463.3 L547.0,466.3 L547.5,465.7 L548.0,460.0 L548.5,456.7 L549.0,452.7 L549.5,452.0 L550.0,456.0 L550.5,458.4 L551.0,453.1 L551.5,455.4 L552.0,455.5 L552.5,458.7 L553.0,462.1 L553.5,464.0 L554.0,464.5 L554.5,461.4 L555.0,461.9 L555.5,466.7 L556.0,461.3 L556.5,458.2 L557.0,458.2 L557.5,460.3 L558.0,459.6 L558.5,456.1 L559.0,456.1 L559.5,452.1 L560.0,451.1 L560.5,454.1 L561.0,453.3 L561.5,451.9 L562.0,447.8 L562.5,452.7 L563.0,455.7 L563.5,455.0 L564.0,455.0 L564.5,455.4 L565.0,457.4 L565.5,457.9 L566.0,462.0 L566.5,462.1 L567.0,461.2 L567.5,459.7 L568.0,460.7 L568.5,464.5 L569.0,464.7 L569.5,462.0 L570.0,456.2 L570.5,460.3 L571.0,460.6 L571.5,460.6 L572.0,456.1 L572.5,451.9 L573.0,454.5 L573.5,457.2 L574.0,457.6 L574.5,457.7 L575.0,460.5 L575.5,458.2 L576.0,460.5 L576.5,463.6 L577.0,465.5 L577.5,462.8 L578.0,459.3 L578.5,459.7 L579.0,461.4 L579.5,461.3 L580.0,458.3 L580.5,453.7 L581.0,457.8 L581.5,460.9 L582.0,463.0 L582.5,463.7 L583.0,462.8 L583.5,462.9 L584.0,464.3 L584.5,468.6 L585.0,463.0 L585.5,457.5 L586.0,454.4 L586.5,456.0 L587.0,457.6 L587.5,459.9 L588.0,462.3 L588.5,464.7 L589.0,463.0 L589.5,465.9 L590.0,465.7 L590.5,458.3 L591.0,457.4 L591.5,459.0 L592.0,459.2 L592.5,464.1 L593.0,464.8 L593.5,463.3 L594.0,465.5 L594.5,467.9 L595.0,466.3 L595.5,462.8 L596.0,459.8 L596.5,457.7 L597.0,454.1 L597.5,457.8 L598.0,459.1 L598.5,459.8 L599.0,460.8 L599.5,463.4 L600.0,467.4 L600.5,463.9 L601.0,460.0 L601.5,456.6 L602.0,457.8 L602.5,455.0 L603.0,458.3 L603.5,457.1 L604.0,454.0 L604.5,454.8 L605.0,462.2 L605.5,461.5 L606.0,461.5 L606.5,461.2 L607.0,459.8 L607.5,458.6 L608.0,455.8 L608.5,453.0 L609.0,452.6 L609.5,451.0 L610.0,451.2 L610.5,456.6 L611.0,461.5 L611.5,461.0 L612.0,459.0 L612.5,462.3 L613.0,461.0 L613.5,459.5 L614.0,455.6 L614.5,453.0 L615.0,452.0 L615.5,454.5 L616.0,452.3 L616.5,453.5 L617.0,453.1 L617.5,457.2 L618.0,457.8 L618.5,462.5 L619.0,464.9 L619.5,458.2 L620.0,462.2 L620.5,459.3 L621.0,463.2 L621.5,459.9 L622.0,451.8 L622.5,453.4 L623.0,455.0 L623.5,451.2 L624.0,457.2 L624.5,456.2 L625.0,455.5 L625.5,457.0 L626.0,459.6 L626.5,459.6 L627.0,459.6 L627.5,460.2 L628.0,460.7 L628.5,463.8 L629.0,467.4 L629.5,465.2 L630.0,461.9 L630.5,462.3 L631.0,458.6 L631.5,461.6 L632.0,456.9 L632.5,454.8 L633.0,454.2 L633.5,458.9 L634.0,463.0 L634.5,464.3 L635.0,466.0 L635.5,467.1 L636.0,465.2 L636.5,466.3 L637.0,464.1 L637.5,464.7 L638.0,457.9 L638.5,456.9 L639.0,457.8 L639.5,459.8 L640.0,459.5 L640.5,458.4 L641.0,458.2 L641.5,463.9 L642.0,467.1 L642.5,467.0 L643.0,466.2 L643.5,461.4 L644.0,463.8 L644.5,462.2 L645.0,459.1 L645.5,457.2 L646.0,451.4 L646.5,453.3 L647.0,456.9 L647.5,464.1 L648.0,460.1 L648.5,462.8 L649.0,462.8 L649.5,467.3 L650.0,467.9 L650.5,462.4 L651.0,459.5 L651.5,454.1 L652.0,453.2 L652.5,455.9 L653.0,455.3 L653.5,456.5 L654.0,458.8 L654.5,462.1 L655.0,467.5 L655.5,466.5 L656.0,462.5 L656.5,457.2 L657.0,453.3 L657.5,455.5 L658.0,452.8 L658.5,452.8 L659.0,450.0 L659.5,452.0 L660.0,460.5 L660.5,465.9 L661.0,466.5 L661.5,464.1 L662.0,463.3 L662.5,459.6 L663.0,461.8 L663.5,458.6 L664.0,453.1 L664.5,449.8 L665.0,452.8 L665.5,455.8 L666.0,453.5 L666.5,453.1 L667.0,455.9 L667.5,456.5 L668.0,460.4 L668.5,464.1 L669.0,464.3 L669.5,460.3 L670.0,461.2 L670.5,459.1 L671.0,458.0 L671.5,456.9 L672.0,451.4 L672.5,451.8 L673.0,453.3 L673.5,454.4 L674.0,457.4 L674.5,453.2 L675.0,457.1 L675.5,457.6 L676.0,464.8 L676.5,463.7 L677.0,463.3 L677.5,464.9 L678.0,461.9 L678.5,463.9 L679.0,462.3 L679.5,457.5 L680.0,453.7 L680.5,453.6 L681.0,456.1 L681.5,453.8 L682.0,456.0 L682.5,450.7 L683.0,455.6 L683.5,455.1 L684.0,461.8 L684.5,459.9 L685.0,458.2 L685.5,459.7 L686.0,465.0 L686.5,465.7 L687.0,468.8 L687.5,463.7 L688.0,463.7 L688.5,465.1 L689.0,469.3 L689.5,466.8 L690.0,462.4 L690.5,462.5 L691.0,459.0 L691.5,462.0 L692.0,463.9 L692.5,461.9 L693.0,457.3 L693.5,458.8 L694.0,460.2 L694.5,461.3 L695.0,462.4 L695.5,460.9 L696.0,457.1 L696.5,462.0 L697.0,466.6 L697.5,463.2 L698.0,464.3 L698.5,462.8 L699.0,465.6 L699.5,467.1 L700.0,466.5 L700.5,463.2 L701.0,460.8 L701.5,462.8 L702.0,461.5 L702.5,460.9 L703.0,459.6 L703.5,455.4 L704.0,453.2 L704.5,455.9 L705.0,455.7 L705.5,452.0 L706.0,451.3 L706.5,452.7 L707.0,455.6 L707.5,459.2 L708.0,462.6 L708.5,458.9 L709.0,458.2 L709.5,462.7 L710.0,464.7 L710.5,467.2 L711.0,464.8 L711.5,458.2 L712.0,460.4 L712.5,457.5 L713.0,458.5 L713.5,451.8 L714.0,448.9 L714.5,450.8 L715.0,452.1 L715.5,457.9 L716.0,454.3 L716.5,457.3 L717.0,461.6 L717.5,462.3 L718.0,466.1 L718.5,460.7 L719.0,459.0 L719.5,455.8 L720.0,455.6 L720.5,454.7 L721.0,454.0 L721.5,454.1 L722.0,449.5 L722.5,453.4 L723.0,456.3 L723.5,457.4 L724.0,460.4 L724.5,458.3 L725.0,462.0 L725.5,464.2 L726.0,466.0 L726.5,459.7 L727.0,462.1 L727.5,456.8 L728.0,460.7 L728.5,459.5 L729.0,456.3 L729.5,454.6 L730.0,452.8 L730.5,455.0 L731.0,459.0 L731.5,456.7 L732.0,460.8 L732.5,459.2 L733.0,464.7 L733.5,463.5 L734.0,466.0 L734.5,466.1 L735.0,461.4 L735.5,461.3 L736.0,463.1 L736.5,461.1 L737.0,456.2 L737.5,456.2 L738.0,457.1 L738.5,460.9 L739.0,462.9 L739.5,462.6 L740.0,457.0 L740.5,458.0 L741.0,464.3 L741.5,464.6 L742.0,464.3 L742.5,465.2 L743.0,462.3 L743.5,468.0 L744.0,470.0 L744.5,467.3 L745.0,466.0 L745.5,459.8 L746.0,461.0 L746.5,459.9 L747.0,457.2 L747.5,456.4 L748.0,453.9 L748.5,454.9 L749.0,459.1 L749.5,460.3 L750.0,459.6 L750.5,463.1 L751.0,462.4 L751.5,466.4 L752.0,467.8 L752.5,465.2 L753.0,461.2 L753.5,462.2 L754.0,461.9 L754.5,461.6 L755.0,461.4 L755.5,456.6 L756.0,455.0 L756.5,453.4 L757.0,456.7 L757.5,458.0 L758.0,457.3 L758.5,457.5 L759.0,459.3 L759.5,461.0 L760.0,463.7 L760.5,462.7 L761.0,461.7 L761.5,458.6 L762.0,460.7 L762.5,460.6 L763.0,459.2 L763.5,455.0 L764.0,454.3 L764.5,456.3 L765.0,455.5 L765.5,458.1 L766.0,453.6 L766.5,453.5 L767.0,456.5 L767.5,457.4 L768.0,460.8 L768.5,457.5 L769.0,456.4 L769.5,456.7 L770.0,458.5 L770.5,461.1 L771.0,460.7 L771.5,457.0 L772.0,455.3 L772.5,456.9 L773.0,459.5 L773.5,454.9 L774.0,455.7 L774.5,452.0 L775.0,452.1 L775.5,457.2 L776.0,457.6 L776.5,457.4 L777.0,455.7 L777.5,459.5 L778.0,462.1 L778.5,466.7 L779.0,461.7 L779.5,453.8 L780.0,458.3 L780.5,461.7 L781.0,462.0 L781.5,450.0 L782.0,449.5 L782.5,460.7 L783.0,464.6 L783.5,458.0 L784.0,457.3 L784.5,463.7 L785.0,466.1 L785.5,459.1 L786.0,454.4 L786.5,457.9 L787.0,465.5 L787.5,455.2 L788.0,450.8 L788.5,461.2 L789.0,473.6 L789.5,470.0 L790.0,454.7" fill="none" stroke="#20d4ee" stroke-width="0.95" stroke-linejoin="bevel"/><path d="M787.5,460.3 L788.2,440.8 L788.8,475.3 L789.4,443.3 L790,466.3" fill="none" stroke="#20d4ee" stroke-width="1"/><path d="M326,522.5 H337 V507.7 L337.0,507.7 L337.5,508.8 L338.0,506.3 L338.5,509.8 L339.0,506.8 L339.5,511.0 L340.0,507.3 L340.5,509.0 L341.0,508.9 L341.5,509.6 L342.0,507.7 L342.5,504.0 L343.0,504.9 L343.5,506.0 L344.0,503.1 L344.5,506.7 L345.0,506.9 L345.5,507.3 L346.0,502.8 L346.5,504.0 L347.0,501.4 L347.5,502.8 L348.0,501.6 L348.5,498.2 L349.0,503.2 L349.5,503.3 L350.0,500.9 L350.5,503.8 L351.0,499.1 L351.5,501.7 L352.0,499.0 L352.5,495.7 L353.0,499.5 L353.5,497.7 L354.0,497.4 L354.5,498.6 L355.0,498.4 L355.5,499.8 L356.0,498.2 L356.5,500.3 L357.0,497.0 L357.5,495.4 L358.0,495.4 L358.5,499.7 L359.0,497.8 L359.5,502.6 L360.0,501.9 L360.5,500.6 L361.0,499.9 L361.5,497.7 L362.0,500.3 L362.5,497.6 L363.0,497.5 L363.5,500.7 L364.0,503.2 L364.5,504.3 L365.0,501.6 L365.5,500.5 L366.0,500.8 L366.5,498.4 L367.0,500.5 L367.5,499.1 L368.0,500.4 L368.5,503.9 L369.0,505.7 L369.5,504.6 L370.0,502.9 L370.5,505.6 L371.0,503.1 L371.5,502.4 L372.0,501.8 L372.5,504.4 L373.0,503.1 L373.5,503.5 L374.0,505.4 L374.5,505.5 L375.0,504.5 L375.5,503.6 L376.0,505.5 L376.5,502.9 L377.0,505.9 L377.5,505.5 L378.0,507.2 L378.5,507.2 L379.0,504.6 L379.5,507.8 L380.0,503.1 L380.5,503.7 L381.0,504.5 L381.5,502.2 L382.0,503.7 L382.5,502.0 L383.0,503.7 L383.5,502.3 L384.0,501.8 L384.5,502.5 L385.0,500.6 L385.5,498.7 L386.0,499.7 L386.5,497.4 L387.0,500.2 L387.5,498.9 L388.0,499.2 L388.5,502.4 L389.0,500.5 L389.5,499.3 L390.0,499.6 L390.5,498.2 L391.0,495.5 L391.5,496.5 L392.0,497.5 L392.5,500.1 L393.0,500.4 L393.5,500.8 L394.0,500.5 L394.5,502.2 L395.0,499.4 L395.5,497.9 L396.0,497.7 L396.5,500.9 L397.0,499.6 L397.5,500.9 L398.0,500.9 L398.5,501.1 L399.0,505.5 L399.5,500.7 L400.0,501.2 L400.5,501.0 L401.0,501.6 L401.5,505.5 L402.0,503.2 L402.5,509.3 L403.0,508.4 L403.5,509.3 L404.0,509.6 L404.5,511.1 L405.0,507.1 L405.5,508.2 L406.0,506.8 L406.5,509.7 L407.0,507.9 L407.5,511.3 L408.0,509.6 L408.5,510.6 L409.0,508.7 L409.5,505.5 L410.0,500.7 L410.5,501.1 L411.0,502.0 L411.5,501.4 L412.0,502.1 L412.5,500.2 L413.0,500.0 L413.5,501.2 L414.0,501.2 L414.5,496.8 L415.0,499.6 L415.5,496.9 L416.0,497.3 L416.5,499.2 L417.0,500.2 L417.5,498.8 L418.0,501.1 L418.5,501.4 L419.0,498.1 L419.5,500.0 L420.0,498.9 L420.5,499.1 L421.0,498.4 L421.5,499.7 L422.0,498.2 L422.5,501.4 L423.0,504.3 L423.5,504.3 L424.0,499.8 L424.5,504.5 L425.0,501.4 L425.5,504.0 L426.0,504.8 L426.5,507.1 L427.0,510.9 L427.5,513.1 L428.0,511.2 L428.5,512.5 L429.0,510.5 L429.5,507.9 L430.0,506.8 L430.5,509.8 L431.0,508.1 L431.5,510.6 L432.0,507.1 L432.5,505.3 L433.0,507.8 L433.5,505.7 L434.0,505.2 L434.5,501.0 L435.0,503.3 L435.5,500.4 L436.0,504.4 L436.5,504.1 L437.0,502.7 L437.5,501.9 L438.0,503.0 L438.5,502.6 L439.0,500.8 L439.5,502.3 L440.0,498.9 L440.5,500.3 L441.0,499.6 L441.5,500.5 L442.0,504.0 L442.5,503.4 L443.0,502.2 L443.5,499.5 L444.0,499.3 L444.5,497.4 L445.0,497.3 L445.5,501.5 L446.0,500.1 L446.5,503.9 L447.0,505.3 L447.5,501.3 L448.0,502.4 L448.5,501.4 L449.0,501.9 L449.5,506.3 L450.0,506.1 L450.5,507.6 L451.0,507.7 L451.5,509.6 L452.0,509.0 L452.5,506.9 L453.0,505.9 L453.5,504.6 L454.0,504.0 L454.5,504.6 L455.0,505.2 L455.5,503.3 L456.0,504.1 L456.5,505.9 L457.0,504.4 L457.5,500.8 L458.0,501.2 L458.5,501.1 L459.0,501.9 L459.5,499.0 L460.0,499.6 L460.5,502.6 L461.0,504.4 L461.5,500.9 L462.0,501.8 L462.5,502.7 L463.0,500.3 L463.5,498.5 L464.0,502.7 L464.5,502.3 L465.0,501.1 L465.5,501.3 L466.0,502.7 L466.5,504.2 L467.0,504.1 L467.5,504.5 L468.0,498.9 L468.5,501.2 L469.0,502.4 L469.5,499.8 L470.0,501.2 L470.5,505.1 L471.0,503.9 L471.5,504.8 L472.0,500.6 L472.5,502.7 L473.0,501.9 L473.5,499.7 L474.0,497.8 L474.5,502.8 L475.0,503.3 L475.5,504.1 L476.0,503.5 L476.5,503.3 L477.0,499.8 L477.5,498.6 L478.0,502.2 L478.5,501.1 L479.0,501.8 L479.5,503.2 L480.0,501.9 L480.5,505.4 L481.0,506.1 L481.5,505.5 L482.0,502.2 L482.5,500.5 L483.0,502.1 L483.5,500.5 L484.0,504.6 L484.5,506.3 L485.0,504.3 L485.5,505.6 L486.0,506.9 L486.5,504.2 L487.0,503.6 L487.5,504.0 L488.0,502.0 L488.5,504.1 L489.0,500.9 L489.5,504.8 L490.0,506.2 L490.5,504.6 L491.0,503.0 L491.5,505.1 L492.0,503.2 L492.5,499.4 L493.0,499.4 L493.5,503.9 L494.0,500.8 L494.5,504.7 L495.0,504.1 L495.5,506.1 L496.0,501.9 L496.5,504.3 L497.0,501.9 L497.5,501.8 L498.0,500.7 L498.5,501.1 L499.0,502.6 L499.5,501.5 L500.0,503.5 L500.5,503.0 L501.0,502.3 L501.5,503.5 L502.0,502.3 L502.5,498.7 L503.0,501.1 L503.5,501.0 L504.0,503.2 L504.5,501.7 L505.0,501.6 L505.5,501.8 L506.0,500.8 L506.5,497.6 L507.0,499.0 L507.5,499.9 L508.0,499.6 L508.5,500.6 L509.0,500.1 L509.5,500.6 L510.0,500.3 L510.5,501.6 L511.0,498.8 L511.5,499.9 L512.0,495.9 L512.5,499.8 L513.0,495.9 L513.5,497.3 L514.0,498.9 L514.5,500.4 L515.0,500.2 L515.5,500.4 L516.0,499.8 L516.5,498.4 L517.0,495.7 L517.5,500.0 L518.0,498.1 L518.5,502.4 L519.0,501.8 L519.5,499.4 L520.0,500.7 L520.5,502.5 L521.0,499.9 L521.5,499.1 L522.0,501.7 L522.5,502.4 L523.0,500.3 L523.5,501.5 L524.0,504.9 L524.5,503.2 L525.0,504.7 L525.5,500.2 L526.0,500.6 L526.5,501.2 L527.0,503.5 L527.5,505.7 L528.0,503.4 L528.5,503.6 L529.0,507.9 L529.5,506.4 L530.0,506.9 L530.5,505.5 L531.0,504.0 L531.5,505.1 L532.0,504.7 L532.5,508.3 L533.0,507.1 L533.5,507.5 L534.0,511.7 L534.5,511.5 L535.0,506.7 L535.5,509.2 L536.0,507.3 L536.5,505.7 L537.0,509.9 L537.5,506.7 L538.0,508.1 L538.5,508.4 L539.0,507.9 L539.5,506.6 L540.0,508.0 L540.5,506.1 L541.0,505.7 L541.5,503.5 L542.0,507.1 L542.5,503.8 L543.0,506.1 L543.5,503.7 L544.0,502.1 L544.5,503.7 L545.0,499.4 L545.5,500.0 L546.0,500.5 L546.5,500.0 L547.0,501.9 L547.5,502.5 L548.0,501.4 L548.5,502.1 L549.0,502.0 L549.5,499.5 L550.0,497.1 L550.5,500.1 L551.0,499.9 L551.5,501.1 L552.0,498.5 L552.5,502.1 L553.0,501.6 L553.5,503.7 L554.0,502.9 L554.5,501.1 L555.0,497.8 L555.5,501.0 L556.0,501.0 L556.5,503.5 L557.0,502.9 L557.5,502.9 L558.0,505.9 L558.5,505.7 L559.0,503.4 L559.5,499.8 L560.0,501.6 L560.5,503.1 L561.0,502.3 L561.5,500.0 L562.0,504.2 L562.5,501.9 L563.0,505.7 L563.5,506.0 L564.0,501.3 L564.5,503.3 L565.0,503.8 L565.5,503.4 L566.0,505.5 L566.5,506.3 L567.0,506.8 L567.5,508.8 L568.0,507.3 L568.5,511.1 L569.0,507.5 L569.5,507.0 L570.0,506.3 L570.5,510.3 L571.0,509.0 L571.5,507.9 L572.0,510.6 L572.5,511.0 L573.0,508.9 L573.5,508.4 L574.0,502.6 L574.5,505.1 L575.0,504.1 L575.5,499.6 L576.0,499.6 L576.5,502.0 L577.0,502.0 L577.5,501.4 L578.0,500.0 L578.5,499.7 L579.0,499.3 L579.5,498.5 L580.0,497.6 L580.5,498.7 L581.0,501.1 L581.5,499.9 L582.0,502.6 L582.5,499.0 L583.0,499.2 L583.5,502.1 L584.0,500.3 L584.5,500.9 L585.0,499.3 L585.5,500.7 L586.0,502.2 L586.5,502.7 L587.0,504.5 L587.5,503.6 L588.0,501.6 L588.5,501.4 L589.0,500.0 L589.5,503.1 L590.0,503.8 L590.5,501.6 L591.0,507.2 L591.5,507.5 L592.0,509.0 L592.5,507.0 L593.0,508.1 L593.5,504.3 L594.0,504.5 L594.5,508.2 L595.0,506.9 L595.5,509.9 L596.0,508.5 L596.5,507.1 L597.0,507.2 L597.5,506.4 L598.0,507.9 L598.5,502.9 L599.0,504.2 L599.5,502.7 L600.0,503.7 L600.5,504.2 L601.0,503.6 L601.5,500.3 L602.0,499.8 L602.5,501.8 L603.0,497.5 L603.5,499.1 L604.0,498.5 L604.5,497.4 L605.0,498.2 L605.5,500.3 L606.0,499.2 L606.5,501.2 L607.0,501.2 L607.5,496.7 L608.0,496.2 L608.5,495.5 L609.0,495.8 L609.5,495.8 L610.0,496.9 L610.5,501.4 L611.0,502.0 L611.5,502.9 L612.0,502.2 L612.5,498.8 L613.0,496.4 L613.5,499.0 L614.0,501.3 L614.5,498.3 L615.0,499.2 L615.5,500.6 L616.0,503.0 L616.5,502.2 L617.0,502.2 L617.5,503.8 L618.0,502.9 L618.5,502.5 L619.0,502.9 L619.5,503.1 L620.0,507.3 L620.5,506.2 L621.0,506.0 L621.5,507.9 L622.0,507.6 L622.5,504.7 L623.0,505.7 L623.5,503.9 L624.0,506.6 L624.5,505.8 L625.0,504.3 L625.5,503.1 L626.0,503.4 L626.5,505.9 L627.0,501.5 L627.5,502.7 L628.0,502.2 L628.5,498.5 L629.0,502.5 L629.5,500.4 L630.0,500.2 L630.5,502.5 L631.0,504.3 L631.5,503.1 L632.0,499.6 L632.5,500.7 L633.0,497.2 L633.5,497.7 L634.0,499.6 L634.5,498.2 L635.0,502.8 L635.5,501.0 L636.0,497.8 L636.5,499.2 L637.0,496.9 L637.5,495.7 L638.0,495.6 L638.5,498.1 L639.0,501.1 L639.5,497.8 L640.0,498.5 L640.5,502.6 L641.0,497.9 L641.5,496.6 L642.0,496.9 L642.5,496.9 L643.0,496.5 L643.5,501.2 L644.0,499.0 L644.5,502.7 L645.0,501.7 L645.5,499.9 L646.0,501.6 L646.5,503.5 L647.0,502.9 L647.5,502.1 L648.0,504.2 L648.5,503.3 L649.0,507.8 L649.5,508.3 L650.0,505.0 L650.5,508.2 L651.0,504.7 L651.5,506.9 L652.0,505.6 L652.5,506.0 L653.0,506.4 L653.5,507.0 L654.0,511.3 L654.5,512.5 L655.0,510.9 L655.5,508.6 L656.0,509.6 L656.5,510.3 L657.0,506.0 L657.5,508.8 L658.0,508.8 L658.5,507.9 L659.0,507.3 L659.5,507.8 L660.0,508.5 L660.5,508.1 L661.0,507.4 L661.5,502.6 L662.0,503.3 L662.5,505.7 L663.0,504.9 L663.5,506.2 L664.0,505.4 L664.5,504.1 L665.0,502.5 L665.5,500.3 L666.0,500.2 L666.5,498.2 L667.0,498.4 L667.5,497.7 L668.0,501.7 L668.5,500.1 L669.0,501.3 L669.5,501.5 L670.0,498.8 L670.5,496.6 L671.0,497.9 L671.5,495.5 L672.0,499.2 L672.5,500.7 L673.0,498.2 L673.5,498.4 L674.0,500.0 L674.5,502.3 L675.0,500.7 L675.5,499.0 L676.0,499.1 L676.5,499.1 L677.0,498.6 L677.5,499.2 L678.0,500.7 L678.5,500.7 L679.0,501.6 L679.5,504.1 L680.0,502.8 L680.5,500.6 L681.0,498.1 L681.5,501.3 L682.0,501.5 L682.5,499.8 L683.0,503.3 L683.5,504.4 L684.0,504.6 L684.5,504.8 L685.0,500.9 L685.5,501.2 L686.0,499.7 L686.5,499.5 L687.0,503.9 L687.5,502.7 L688.0,502.8 L688.5,501.5 L689.0,503.3 L689.5,504.1 L690.0,500.1 L690.5,499.5 L691.0,502.0 L691.5,500.6 L692.0,499.7 L692.5,500.6 L693.0,502.1 L693.5,500.7 L694.0,502.1 L694.5,501.8 L695.0,500.0 L695.5,498.1 L696.0,500.2 L696.5,502.3 L697.0,502.8 L697.5,500.2 L698.0,501.8 L698.5,504.2 L699.0,502.8 L699.5,501.5 L700.0,499.7 L700.5,503.7 L701.0,500.8 L701.5,504.4 L702.0,506.9 L702.5,506.6 L703.0,505.4 L703.5,507.4 L704.0,507.1 L704.5,504.6 L705.0,506.2 L705.5,505.8 L706.0,506.4 L706.5,507.6 L707.0,510.5 L707.5,507.1 L708.0,509.9 L708.5,511.2 L709.0,508.7 L709.5,505.6 L710.0,508.0 L710.5,504.6 L711.0,508.5 L711.5,506.9 L712.0,505.8 L712.5,508.2 L713.0,509.8 L713.5,505.5 L714.0,505.5 L714.5,501.8 L715.0,503.3 L715.5,502.2 L716.0,505.0 L716.5,502.1 L717.0,504.9 L717.5,503.2 L718.0,506.5 L718.5,501.1 L719.0,503.9 L719.5,498.9 L720.0,502.2 L720.5,499.2 L721.0,502.5 L721.5,504.0 L722.0,503.1 L722.5,504.1 L723.0,501.2 L723.5,503.3 L724.0,500.6 L724.5,500.0 L725.0,499.3 L725.5,501.4 L726.0,500.0 L726.5,500.0 L727.0,500.2 L727.5,500.0 L728.0,502.5 L728.5,499.7 L729.0,500.6 L729.5,499.1 L730.0,500.3 L730.5,498.2 L731.0,501.6 L731.5,498.0 L732.0,501.6 L732.5,500.9 L733.0,501.1 L733.5,500.4 L734.0,499.6 L734.5,498.8 L735.0,499.4 L735.5,499.4 L736.0,502.0 L736.5,502.5 L737.0,503.8 L737.5,504.5 L738.0,501.3 L738.5,503.0 L739.0,504.1 L739.5,501.7 L740.0,502.3 L740.5,502.5 L741.0,507.0 L741.5,503.5 L742.0,504.6 L742.5,505.8 L743.0,504.2 L743.5,501.3 L744.0,500.9 L744.5,501.6 L745.0,500.3 L745.5,502.6 L746.0,503.8 L746.5,502.6 L747.0,505.1 L747.5,501.2 L748.0,502.4 L748.5,500.3 L749.0,503.0 L749.5,502.2 L750.0,503.3 L750.5,503.1 L751.0,503.9 L751.5,501.6 L752.0,501.2 L752.5,500.6 L753.0,501.1 L753.5,501.5 L754.0,500.6 L754.5,501.6 L755.0,500.3 L755.5,501.8 L756.0,503.3 L756.5,503.2 L757.0,503.6 L757.5,502.2 L758.0,499.8 L758.5,501.0 L759.0,499.4 L759.5,498.9 L760.0,500.2 L760.5,505.9 L761.0,502.1 L761.5,502.8 L762.0,503.7 L762.5,501.2 L763.0,504.8 L763.5,501.2 L764.0,504.1 L764.5,503.9 L765.0,504.7 L765.5,502.0 L766.0,505.5 L766.5,504.9 L767.0,502.2 L767.5,499.3 L768.0,498.1 L768.5,498.2 L769.0,501.1 L769.5,501.3 L770.0,499.4 L770.5,500.7 L771.0,500.7 L771.5,499.5 L772.0,500.0 L772.5,499.2 L773.0,497.3 L773.5,501.9 L774.0,501.5 L774.5,501.6 L775.0,503.8 L775.5,505.2 L776.0,504.6 L776.5,500.5 L777.0,500.4 L777.5,498.8 L778.0,501.4 L778.5,501.0 L779.0,504.2 L779.5,503.3 L780.0,500.8 L780.5,501.2 L781.0,505.9 L781.5,506.0 L782.0,506.5 L782.5,501.2 L783.0,505.0 L783.5,508.9 L784.0,512.6 L784.5,506.9 L785.0,505.8 L785.5,512.9 L786.0,515.6 L786.5,509.7 L787.0,498.8 L787.5,504.8 L788.0,511.8 L788.5,509.4 L789.0,499.1 L789.5,499.8 L790.0,506.0" fill="none" stroke="#22d0e2" stroke-width="0.95" stroke-linejoin="bevel"/><path d="M787.5,506.1 L788.2,486.6 L788.8,521.1 L789.4,489.1 L790,512.1" fill="none" stroke="#22d0e2" stroke-width="1"/></svg>
<div class="a" style="left:864px;top:45px;width:44px;height:17px;background:#efefef;border:1.8px solid #c6c6c6;border-radius:4px"></div>
<span class="t" style="left:868.90px;top:47.00px;font-size:11.01px;font-weight:normal;color:#1a1a1a;transform:scaleX(1.022);transform-origin:left 50%;">Export</span>
<span class="t" style="left:930.40px;top:49.00px;font-size:15.36px;font-weight:bold;color:#111;transform:scaleX(1.091);transform-origin:left 50%;">Data Files</span>
<div class="a" style="left:930.4px;top:63px;width:79.39999999999998px;height:1.5999999999999943px;background:#111"></div>
<svg class="a" style="left:1052px;top:47px" width="16" height="13" viewBox="0 0 16 13"><path d="M1 2.5 Q1 1 2.5 1 H6 L7.5 2.5 H13 Q14.5 2.5 14.5 4 V11 Q14.5 12 13.5 12 H2 Q1 12 1 11 Z" fill="#f3c56c"/><path d="M1.5 5 H15 L14 11.5 Q13.8 12 13 12 H2.5 Q1.8 12 1.6 11.5 Z" fill="#fbd98f"/></svg>
<div class="a" style="left:890px;top:72px;width:16.5px;height:16px;border:1.3px solid #c3cbe6;border-radius:4px;background:#fff;"></div>
<span class="t" style="left:914.00px;top:75.00px;font-size:10.43px;font-weight:bold;color:#1a1a1a;transform:scaleX(1.055);transform-origin:left 50%;">Raw Data (muV/Time)</span>
<div class="a" style="left:890px;top:89.5px;width:16.5px;height:16.099999999999994px;border:1.3px solid #c3cbe6;border-radius:4px;background:#fff;"></div>
<span class="t" style="left:914.00px;top:93.00px;font-size:10.43px;font-weight:bold;color:#1a1a1a;">Frequency Analysis (FFT)</span>
<div class="a" style="left:890px;top:107.3px;width:16.5px;height:16.299999999999997px;border:1.3px solid #c3cbe6;border-radius:4px;background:#fff;"></div>
<span class="t" style="left:914.00px;top:111.00px;font-size:10.43px;font-weight:bold;color:#1a1a1a;">Power/PSD Analysis</span>
<span class="t" style="left:875.40px;top:136.00px;font-size:11.88px;font-weight:bold;color:#1a1a1a;transform:scaleX(1.035);transform-origin:left 50%;">File Type:</span>
<div class="a" style="left:943px;top:133px;width:116px;height:18px;background:#efefef;border:1.5px solid #c6c6c6;border-radius:4px"></div><div class="a" style="left:1030.6px;top:134.5px;width:26.90000000000009px;height:15.0px;background:#dcdcdc;border-left:1px solid #c8c8c8;border-radius:0 3px 3px 0"></div><svg class="a" style="left:0;top:0;overflow:visible" width="1" height="1"><polygon points="1039.4,139.8 1039.4,142.6 1044.8,144.6 1050.2,142.6 1050.2,139.8 1044.8,141.8" fill="#151515"/></svg>
<div class="a" style="left:946px;top:136px;width:83px;height:10.5px;overflow:hidden"><span class="t" style="left:1.70px;top:3.00px;font-size:11.88px;font-weight:normal;color:#222;">Select file type</span></div>
<span class="t" style="left:864.20px;top:162.00px;font-size:11.30px;font-weight:bold;color:#111;transform:scaleX(1.138);transform-origin:left 50%;">Not recording: File type not selec</span>
<span class="t" style="left:917.40px;top:202.00px;font-size:15.36px;font-weight:bold;color:#111;transform:scaleX(1.083);transform-origin:left 50%;">Board Config</span>
<div class="a" style="left:917.4px;top:215.8px;width:105.60000000000002px;height:1.5999999999999943px;background:#111"></div>
<div class="a" style="left:889.6px;top:238px;width:23.899999999999977px;height:24px;border:1.5px solid #c3cbe6;border-radius:5px;background:#fff"></div>
<span class="t" style="left:886.20px;top:267.00px;font-size:11.01px;font-weight:bold;color:#1a1a1a;transform:scaleX(1.070);transform-origin:left 50%;">Board</span>
<span class="t" style="left:886.40px;top:281.00px;font-size:10.00px;font-weight:bold;color:#1a1a1a;transform:scaleX(1.061);transform-origin:left 50%;">On/Off</span>
<span class="t" style="left:963.00px;top:237.00px;font-size:10.43px;font-weight:bold;color:#1a1a1a;transform:scaleX(1.031);transform-origin:left 50%;">Channels On/Off</span>
<span class="t" style="left:877.90px;top:311.00px;font-size:11.88px;font-weight:bold;color:#1a1a1a;transform:scaleX(1.028);transform-origin:left 50%;">Board ID</span>
<div class="a" style="left:881.4px;top:326.3px;width:44.30000000000007px;height:26.0px;background:#efefef;border:1.8px solid #c9c9c9;border-radius:4px"></div>
<span class="t" style="left:888.00px;top:334.00px;font-size:11.01px;font-weight:normal;color:#222;transform:scaleX(1.022);transform-origin:left 50%;">57</span>
<svg class="a" style="left:940px;top:240px" width="130" height="125" viewBox="940 240 130 125"><defs><linearGradient id="kg" x1="0.3" y1="0" x2="0.5" y2="1"><stop offset="0" stop-color="#80bdfb"/><stop offset="0.55" stop-color="#6eaaf2"/><stop offset="1" stop-color="#5a94e4"/></linearGradient></defs><line x1="987.4" y1="340.2" x2="983.4" y2="347.1" stroke="#9a9a9a" stroke-width="1"/><line x1="971.4" y1="324.1" x2="966.8" y2="326.3" stroke="#9a9a9a" stroke-width="1"/><line x1="969.1" y1="298.1" x2="964.3" y2="296.8" stroke="#9a9a9a" stroke-width="1"/><line x1="981.4" y1="278.7" x2="978.2" y2="274.9" stroke="#9a9a9a" stroke-width="1"/><line x1="1006.0" y1="269.8" x2="1006.0" y2="264.8" stroke="#9a9a9a" stroke-width="1"/><line x1="1030.6" y1="278.7" x2="1033.8" y2="274.9" stroke="#9a9a9a" stroke-width="1"/><line x1="1042.9" y1="298.1" x2="1047.7" y2="296.8" stroke="#9a9a9a" stroke-width="1"/><line x1="1040.6" y1="324.1" x2="1045.2" y2="326.3" stroke="#9a9a9a" stroke-width="1"/><line x1="1025.1" y1="341.1" x2="1027.6" y2="345.4" stroke="#9a9a9a" stroke-width="1"/><circle cx="1006" cy="308" r="35.2" fill="url(#kg)" stroke="#44679a" stroke-width="0.9"/><circle cx="1005.4" cy="284" r="6.6" fill="#5f98e0" stroke="#a9cff6" stroke-width="1.1"/></svg>
<span class="t" style="left:968.28px;top:346.00px;font-size:10.72px;font-weight:bold;color:#1a1a1a;">Off</span>
<span class="t" style="left:954.52px;top:323.00px;font-size:10.72px;font-weight:bold;color:#1a1a1a;">1</span>
<span class="t" style="left:954.02px;top:289.00px;font-size:10.72px;font-weight:bold;color:#1a1a1a;">2</span>
<span class="t" style="left:971.02px;top:262.00px;font-size:10.72px;font-weight:bold;color:#1a1a1a;">3</span>
<span class="t" style="left:1001.62px;top:250.00px;font-size:10.72px;font-weight:bold;color:#1a1a1a;">4</span>
<span class="t" style="left:1032.02px;top:262.00px;font-size:10.72px;font-weight:bold;color:#1a1a1a;">5</span>
<span class="t" style="left:1051.52px;top:289.00px;font-size:10.72px;font-weight:bold;color:#1a1a1a;">6</span>
<span class="t" style="left:1049.52px;top:325.00px;font-size:10.72px;font-weight:bold;color:#1a1a1a;">7</span>
<span class="t" style="left:1032.02px;top:346.00px;font-size:10.72px;font-weight:bold;color:#1a1a1a;">8</span>
<div class="a" style="left:881px;top:371px;width:16.5px;height:16.5px;background:#1552c6;border-radius:4px"></div>
<svg class="a" style="left:881px;top:371px" width="17" height="17" viewBox="0 0 17 17"><path d="M4 8.8 L7.2 12 L13.2 5.5" fill="none" stroke="#fff" stroke-width="1.6"/></svg>
<span class="t" style="left:905.00px;top:374.00px;font-size:10.43px;font-weight:bold;color:#1a1a1a;transform:scaleX(1.044);transform-origin:left 50%;">Common Reference On/Off</span>
<span class="t" style="left:883.70px;top:400.00px;font-size:11.88px;font-weight:bold;color:#1a1a1a;transform:scaleX(0.983);transform-origin:left 50%;">Port:</span>
<div class="a" style="left:917px;top:397px;width:124.20000000000005px;height:17.19999999999999px;background:#efefef;border:1.5px solid #c6c6c6;border-radius:4px"></div><div class="a" style="left:1012.6px;top:398.5px;width:27.100000000000023px;height:14.199999999999989px;background:#dcdcdc;border-left:1px solid #c8c8c8;border-radius:0 3px 3px 0"></div><svg class="a" style="left:0;top:0;overflow:visible" width="1" height="1"><polygon points="1021.5,403.4 1021.5,406.2 1026.9,408.2 1032.3,406.2 1032.3,403.4 1026.9,405.4" fill="#151515"/></svg><span class="t" style="left:921.80px;top:401.00px;font-size:10.87px;font-weight:normal;color:#222;transform:scaleX(0.889);transform-origin:left 50%;">COM4</span>
<span class="t" style="left:909.60px;top:456.00px;font-size:15.36px;font-weight:bold;color:#111;transform:scaleX(1.105);transform-origin:left 50%;">Epoch/Timing</span>
<div class="a" style="left:909.6px;top:469.7px;width:112.19999999999993px;height:1.6000000000000227px;background:#111"></div>
<span class="t" style="left:881.00px;top:490.00px;font-size:10.43px;font-weight:bold;color:#1a1a1a;transform:scaleX(1.033);transform-origin:left 50%;">Time Before Onset</span>
<div class="a" style="left:997px;top:488.2px;width:44.200000000000045px;height:17.100000000000023px;background:#efefef;border:1.8px solid #c9c9c9;border-radius:4px"></div><div class="a" style="left:1026px;top:490.2px;width:13.5px;height:13.100000000000023px;background:#dcdcdc;border-radius:2px"></div><svg class="a" style="left:1027px;top:489.4px" width="12" height="15" viewBox="0 0 12 15"><path d="M2 5.5 L6 2 L10 5.5 M2 9.5 L6 13 L10 9.5" fill="none" stroke="#151515" stroke-width="1.8"/></svg><span class="t" style="left:1004.00px;top:491.00px;font-size:10.72px;font-weight:normal;color:#222;">2</span>
<span class="t" style="left:881.00px;top:517.00px;font-size:10.43px;font-weight:bold;color:#1a1a1a;transform:scaleX(1.045);transform-origin:left 50%;">Time After Onset</span>
<div class="a" style="left:997px;top:514.6px;width:44.200000000000045px;height:17.5px;background:#efefef;border:1.8px solid #c9c9c9;border-radius:4px"></div><div class="a" style="left:1026px;top:516.6px;width:13.5px;height:13.5px;background:#dcdcdc;border-radius:2px"></div><svg class="a" style="left:1027px;top:515.8px" width="12" height="15" viewBox="0 0 12 15"><path d="M2 5.5 L6 2 L10 5.5 M2 9.5 L6 13 L10 9.5" fill="none" stroke="#151515" stroke-width="1.8"/></svg><span class="t" style="left:1004.00px;top:518.00px;font-size:10.72px;font-weight:normal;color:#222;">2</span>
<span class="t" style="left:881.00px;top:544.00px;font-size:10.43px;font-weight:bold;color:#1a1a1a;transform:scaleX(1.046);transform-origin:left 50%;">Time Between Trials</span>
<div class="a" style="left:997px;top:541.2px;width:44.200000000000045px;height:17.5px;background:#efefef;border:1.8px solid #c9c9c9;border-radius:4px"></div><div class="a" style="left:1026px;top:543.2px;width:13.5px;height:13.5px;background:#dcdcdc;border-radius:2px"></div><svg class="a" style="left:1027px;top:542.4px" width="12" height="15" viewBox="0 0 12 15"><path d="M2 5.5 L6 2 L10 5.5 M2 9.5 L6 13 L10 9.5" fill="none" stroke="#151515" stroke-width="1.8"/></svg><span class="t" style="left:1004.00px;top:545.00px;font-size:10.72px;font-weight:normal;color:#222;">3</span>
<span class="t" style="left:881.00px;top:570.00px;font-size:10.43px;font-weight:bold;color:#1a1a1a;transform:scaleX(1.009);transform-origin:left 50%;"># of Trials</span>
<div class="a" style="left:943.6px;top:568px;width:99.60000000000002px;height:18px;background:#efefef;border:1.8px solid #c9c9c9;border-radius:4px"></div>
<span class="t" style="left:950.00px;top:572.00px;font-size:10.72px;font-weight:normal;color:#222;">5</span>
<div class="a" style="left:8px;top:670.5px;width:36px;height:35.0px;border:2.2px solid #000;border-radius:8px;background:#fff"></div>
<div class="a" style="left:20.5px;top:682px;width:12.0px;height:12px;background:#000"></div>
<div class="a" style="left:58px;top:682px;width:510.5px;height:71.5px;background:#3394fa"></div>
<div class="a" style="left:568.5px;top:682px;width:376.0px;height:71.5px;background:#dadada"></div>
<div class="a" style="left:57.5px;top:681.5px;width:887.0px;height:1.0px;background:#000"></div>
<div class="a" style="left:57.5px;top:752.5px;width:887.0px;height:1.0px;background:#000"></div>
<div class="a" style="left:57.5px;top:716.5px;width:887.0px;height:2.0px;background:#000"></div>
<div class="a" style="left:568px;top:682px;width:1px;height:71.5px;background:#000"></div>
<div class="a" style="left:499.8px;top:681.5px;width:2.3999999999999773px;height:73.0px;background:#000;border-radius:1px"></div>
<div class="a" style="left:57.5px;top:682px;width:1.0px;height:71.5px;background:repeating-linear-gradient(#555 0 3px,transparent 3px 5px)"></div>
<div class="a" style="left:278.8px;top:682px;width:1.0px;height:71.5px;background:repeating-linear-gradient(#555 0 3px,transparent 3px 5px)"></div>
<div class="a" style="left:722.2px;top:682px;width:1.0px;height:71.5px;background:repeating-linear-gradient(#555 0 3px,transparent 3px 5px)"></div>
<div class="a" style="left:943.5px;top:682px;width:1.0px;height:71.5px;background:repeating-linear-gradient(#555 0 3px,transparent 3px 5px)"></div>
<div class="a" style="left:988.3px;top:682px;width:45.299999999999955px;height:138.39999999999998px;background:#dadada;border:1px solid #000;box-shadow:inset 1px 0 0 #fff"></div>
<span class="t" style="left:52.90px;top:774.00px;font-size:11.16px;font-weight:bold;color:#111;transform:scaleX(1.229);transform-origin:left 50%;">-2s</span>
<span class="t" style="left:274.20px;top:774.00px;font-size:11.16px;font-weight:bold;color:#111;transform:scaleX(1.038);transform-origin:left 50%;">-1s</span>
<span class="t" style="left:495.60px;top:774.00px;font-size:11.16px;font-weight:bold;color:#111;transform:scaleX(1.236);transform-origin:left 50%;">0s</span>
<span class="t" style="left:716.40px;top:774.00px;font-size:11.16px;font-weight:bold;color:#111;transform:scaleX(1.011);transform-origin:left 50%;">1s</span>
<span class="t" style="left:938.70px;top:774.00px;font-size:11.16px;font-weight:bold;color:#111;transform:scaleX(1.196);transform-origin:left 50%;">2s</span>
<span class="t" style="left:427.10px;top:793.00px;font-size:16.67px;font-weight:bold;color:#d00d0d;transform:scaleX(1.099);transform-origin:left 50%;">Movement Onset</span>
<span class="t" style="left:139.40px;top:810.00px;font-size:13.62px;font-weight:bold;color:#111;transform:scaleX(1.116);transform-origin:left 50%;">Total Time: 2.31s (Trial 1)</span>
<span class="t" style="left:694.40px;top:810.00px;font-size:13.62px;font-weight:bold;color:#111;transform:scaleX(1.104);transform-origin:left 50%;">Trial 1 Time: 0.31s</span>
<svg class="a" style="left:1043px;top:800px" width="32" height="32" viewBox="0 0 32 32"><circle cx="16" cy="16.2" r="13.6" fill="#86c6f4" stroke="#0a4fc4" stroke-width="2.2"/><path d="M9.2,16.2 C9.2,12.8 12.2,10.6 16,10.6 C19.8,10.6 22.6,12.8 22.6,16 C22.6,19.2 19.8,21.2 16,21.2 C15,21.2 14,21 13.2,20.8 L10.8,22.6 L11.2,19.8 C9.9,18.9 9.2,17.6 9.2,16.2 Z" fill="#fff" stroke="#e8dcd0" stroke-width="0.5"/></svg></body></html>
